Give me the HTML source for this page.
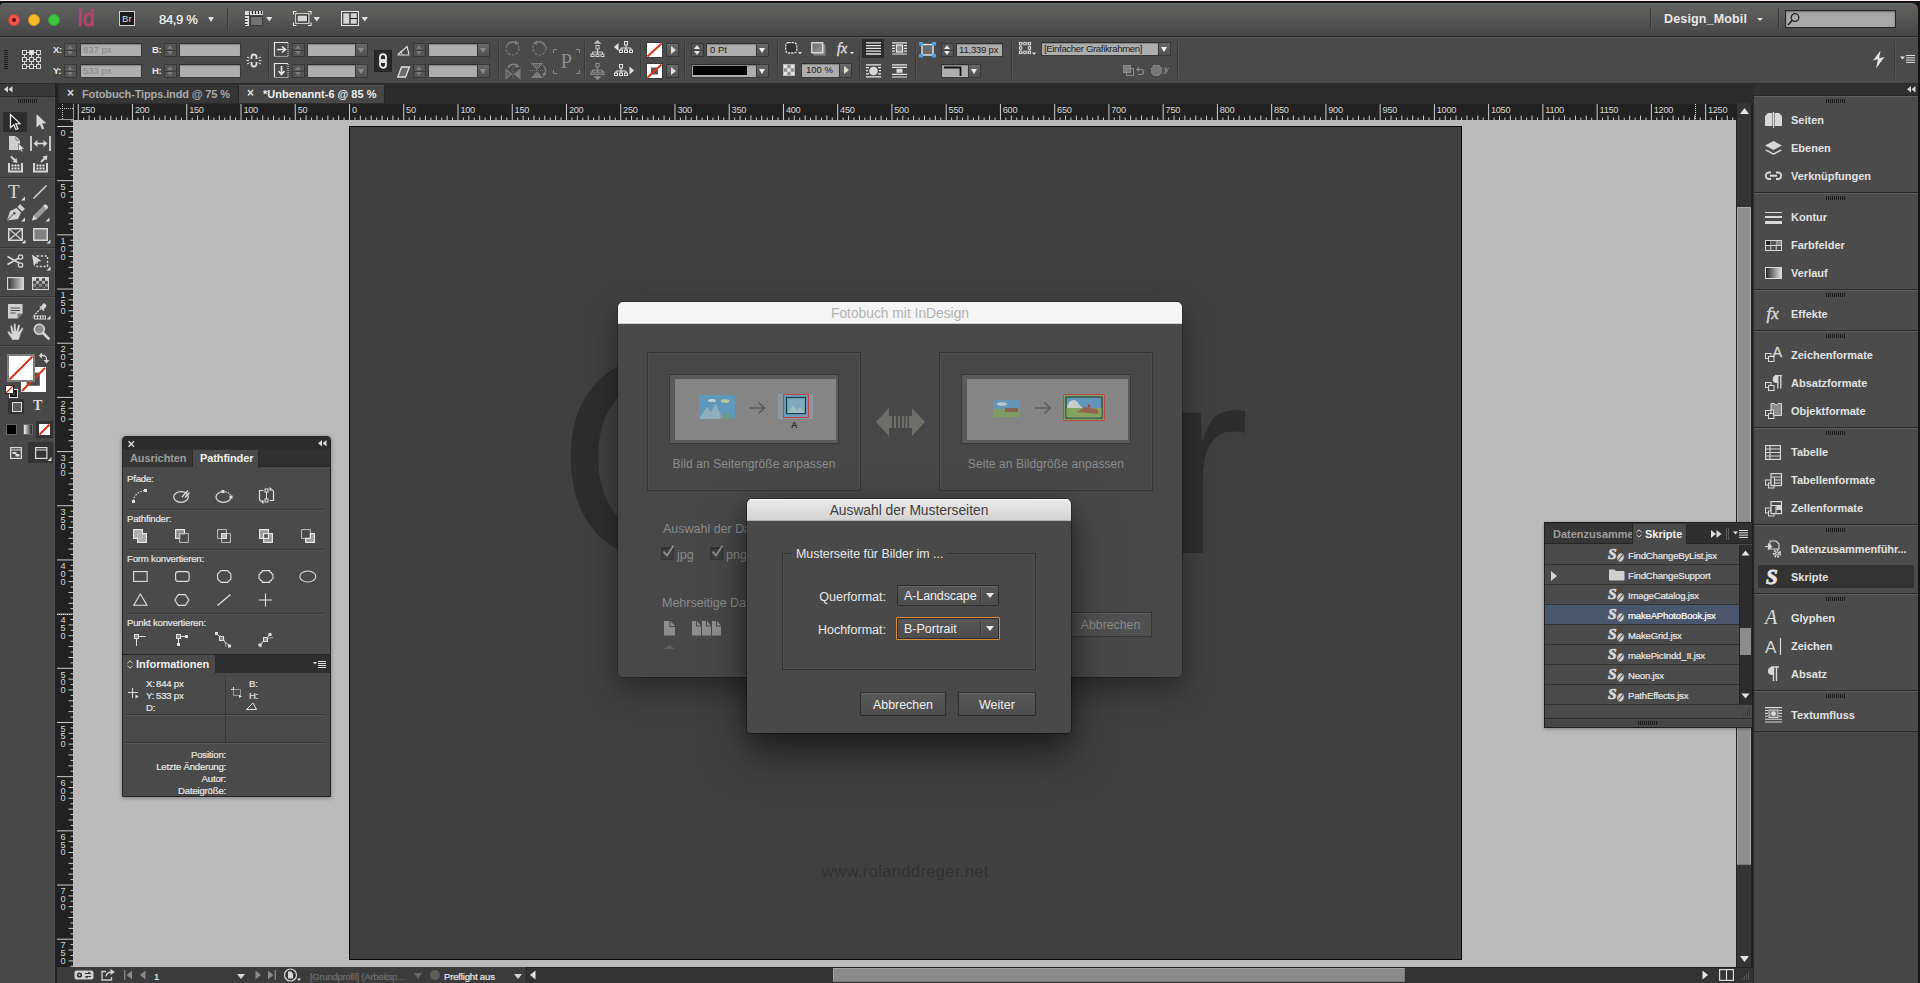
<!DOCTYPE html>
<html lang="de"><head><meta charset="utf-8"><title>InDesign</title>
<style>
*{box-sizing:border-box;margin:0;padding:0}
html,body{width:1920px;height:983px;overflow:hidden;background:#3a3a3a}
body{font-family:"Liberation Sans",sans-serif;font-size:11px;color:#ddd;-webkit-font-smoothing:antialiased}
#app{position:relative;width:1920px;height:983px;overflow:hidden;background:#3c3c3c}
.abs{position:absolute}
svg{position:absolute;overflow:visible}
/* app bar */
#appbar{position:absolute;left:0;top:0;width:1918px;height:37px;background:linear-gradient(#fbeef3 0,#fbeef3 1px,#1a1214 1px,#1a1214 2.800px,#707471 3px,#5e635f 4.500px,#5e5e5c 9px,#555 20px,#464646 35px);border-bottom:1px solid #232323}
#ctrl{position:absolute;left:0;top:37px;width:1918px;height:47px;background:#4a4a4a;border-top:1px solid #5c5c5c;border-bottom:1px solid #2a2a2a}
.vsep{position:absolute;width:2px;top:5px;height:36px;border-left:1px solid #3a3a3a;border-right:1px solid #565656}
.fld{position:absolute;height:14px;background:#aeaeae;border:1px solid #3a3a3a;border-top-color:#2e2e2e;color:#222;font-size:10px;line-height:12px;padding-left:3px;white-space:nowrap;overflow:hidden;box-shadow:inset 0 1px 1px rgba(0,0,0,.25)}
.fld.dis{color:#858585}
.stp{position:absolute;width:13px;height:14px;background:#555;border:1px solid #383838}
.stp:before{content:"";position:absolute;left:2px;top:1px;border:3.5px solid transparent;border-top:0;border-bottom:4px solid #7a7a7a}
.stp:after{content:"";position:absolute;left:2px;top:7px;border:3.5px solid transparent;border-bottom:0;border-top:4px solid #7a7a7a}
.stp.on:before{border-bottom-color:#e8e8e8}.stp.on:after{border-top-color:#e8e8e8}
.stp i{position:absolute;left:0;right:0;top:5.5px;height:1px;background:#3c3c3c}
.ddb{position:absolute;width:13px;height:14px;background:linear-gradient(#686868,#505050);border:1px solid #383838}
.ddb:after{content:"";position:absolute;left:2px;top:4px;border:3.5px solid transparent;border-bottom:0;border-top:5px solid #8a8a8a}
.ddb.on:after{border-top-color:#f0f0f0}
.arb{position:absolute;width:13px;height:14px;background:linear-gradient(#6a6a6a,#545454);border:1px solid #383838}
.arb:after{content:"";position:absolute;left:4px;top:2px;border:4px solid transparent;border-right:0;border-left:5px solid #ddd}
.lbl{position:absolute;color:#e6e6e6;font-size:9.500px;font-weight:bold;line-height:12px;letter-spacing:-.3px}
.sm{position:absolute;font-size:9.600px;line-height:12px;color:#e6e6e6;letter-spacing:-.2px;white-space:nowrap;-webkit-text-stroke:.2px}
.hsep{position:absolute;height:2px;border-top:1px solid #3a3a3a;border-bottom:1px solid #565656}
.pi{position:absolute}
</style></head>
<body><div id="app">
<div id="appbar"></div>
<div id="ctrl"></div>
<!-- traffic lights -->
<div class="abs" style="left:8px;top:14px;width:12px;height:12px;border-radius:50%;background:#f1574f;border:1px solid #c9423b"></div>
<div class="abs" style="left:12px;top:18px;width:4px;height:4px;border-radius:50%;background:#5a0f0c"></div>
<div class="abs" style="left:28px;top:14px;width:12px;height:12px;border-radius:50%;background:#f7bb2b;border:1px solid #d39c20"></div>
<div class="abs" style="left:48px;top:14px;width:12px;height:12px;border-radius:50%;background:#3ec63f;border:1px solid #2ea52f"></div>
<div class="abs" style="left:77px;top:4px;font-size:24.500px;line-height:28px;color:#b5446b;transform:scaleX(.84);transform-origin:0 0;-webkit-text-stroke:.9px #b5446b">Id</div>
<div class="abs" style="left:119px;top:11px;width:16px;height:15px;background:#1c1c1c;border:1px solid #d0d0d0;color:#dedede;font-size:9.500px;line-height:13px;text-align:center;letter-spacing:.2px">Br</div>
<div class="abs" style="left:159px;top:12px;font-size:13px;line-height:16px;color:#ececec;letter-spacing:-.35px;text-shadow:0 0 .6px #ececec">84,9 %</div>
<div class="abs" style="left:208px;top:17px;border:3.5px solid transparent;border-bottom:0;border-top:5px solid #e0e0e0"></div>
<div class="abs" style="left:227px;top:8px;width:2px;height:21px;border-left:1px solid #3a3a3a;border-right:1px solid #5c5c5c"></div>
<!-- view options icon -->
<svg class="abs" style="left:245px;top:11px" width="28" height="16" viewBox="0 0 28 16"><rect x="0" y="0" width="18" height="15" fill="#dedede"/><rect x="5.500" y="5.500" width="12" height="9" fill="#727272" stroke="#3a3a3a"/><path d="M0 4.500h18M4.500 0v15" stroke="#444" fill="none"/><path d="M7.500 0v3M10.500 0v3M13.500 0v3M16.500 0v3M0 7.500h2.500M0 10.500h2.500M0 13.500h2.500" stroke="#222" stroke-width="1.200"/><path d="M21 6h6.500l-3.250 4.500z" fill="#e0e0e0"/></svg>
<!-- screen mode icon -->
<svg class="abs" style="left:293px;top:11px" width="28" height="16" viewBox="0 0 28 16"><path d="M.5 3.500V.5H3.500M15 .5h3V3.500M18 11.500v3h-3M3.500 14.500H.5v-3" fill="none" stroke="#e4e4e4" stroke-width="1.200"/><rect x="2.800" y="2.800" width="13" height="9.400" fill="none" stroke="#e6e6e6" stroke-width="1.200"/><rect x="4" y="4" width="10.600" height="7" fill="#d2d2d2" stroke="#1e1e1e" stroke-width="1.100"/><path d="M20.500 6h6.500l-3.250 4.500z" fill="#e0e0e0"/></svg>
<!-- arrange icon -->
<svg class="abs" style="left:341px;top:11px" width="28" height="15" viewBox="0 0 28 15"><rect x=".6" y=".6" width="16.800" height="13.800" fill="#d2d2d2" stroke="#e8e8e8" stroke-width="1.200"/><rect x="1.700" y="1.700" width="14.600" height="11.600" fill="none" stroke="#1e1e1e" stroke-width="1"/><path d="M9 1.700v11.600M9 7.500h7.500" stroke="#1e1e1e" stroke-width="1.200" fill="none"/><path d="M20.500 6h6.500l-3.250 4.500z" fill="#e0e0e0"/></svg>
<!-- right of appbar -->
<div class="abs" style="left:1650px;top:8px;width:2px;height:21px;border-left:1px solid #3a3a3a;border-right:1px solid #5c5c5c"></div>
<div class="abs" style="left:1664px;top:12px;font-size:12.500px;font-weight:bold;line-height:15px;color:#e8e8e8;letter-spacing:.150px">Design_Mobil</div>
<div class="abs" style="left:1757px;top:18px;border:3px solid transparent;border-bottom:0;border-top:3.500px solid #e0e0e0"></div>
<div class="abs" style="left:1778px;top:8px;width:2px;height:21px;border-left:1px solid #3a3a3a;border-right:1px solid #5c5c5c"></div>
<div class="abs" style="left:1785px;top:10px;width:111px;height:18px;background:#a8a8a8;border:1px solid #252525;box-shadow:inset 0 1px 2px rgba(0,0,0,.35)"></div>
<svg class="abs" style="left:1787px;top:12px" width="14" height="14" viewBox="0 0 14 14"><circle cx="8" cy="5.500" r="3.800" fill="none" stroke="#222" stroke-width="1.300"/><path d="M5.300 8.300L1 13" stroke="#222" stroke-width="1.600"/></svg>

<svg class="abs" style="left:1912px;top:3px" width="6" height="6" viewBox="0 0 6 6"><path d="M0 0h6v6A6 6 0 0 0 0 0z" fill="#141414"/></svg>
<svg class="abs" style="left:0;top:3px" width="4" height="4" viewBox="0 0 4 4"><path d="M0 0h4A4 4 0 0 0 0 4z" fill="#141414"/></svg>

<!-- control bar widgets -->
<div class="abs" style="left:4px;top:50px;width:4px;height:20px;background:repeating-linear-gradient(#1c1c1c 0,#1c1c1c 1px,transparent 1px,transparent 2px)"></div>
<svg class="abs" style="left:22px;top:50px" width="20" height="20" viewBox="0 0 20 20" fill="none" stroke="#d4d4d4"><path d="M4 2.500h12M4 9.500h12M4 16.500h12M2.500 4v12M9.500 4v12M16.500 4v12" stroke-width="1"/><g fill="#494949"><rect x=".5" y=".5" width="4" height="4"/><rect x="14.500" y=".5" width="4" height="4"/><rect x=".5" y="7.500" width="4" height="4"/><rect x="7.500" y="7.500" width="4" height="4"/><rect x="14.500" y="7.500" width="4" height="4"/><rect x=".5" y="14.500" width="4" height="4"/><rect x="7.500" y="14.500" width="4" height="4"/><rect x="14.500" y="14.500" width="4" height="4"/></g><rect x="7.500" y=".5" width="4" height="4" fill="#e8e8e8"/></svg>
<div class="lbl" style="left:53px;top:44px">X:</div><div class="lbl" style="left:53px;top:65px">Y:</div>
<div class="stp" style="left:64px;top:43px"><i></i></div><div class="stp" style="left:64px;top:64px"><i></i></div>
<div class="fld dis" style="left:80px;top:43px;width:62px;font-size:9.500px;padding-left:2px;line-height:11px">837 px</div><div class="fld dis" style="left:80px;top:64px;width:62px;font-size:9.500px;padding-left:2px;line-height:11px">533 px</div>
<div class="lbl" style="left:152px;top:44px">B:</div><div class="lbl" style="left:152px;top:65px">H:</div>
<div class="stp" style="left:164px;top:43px"><i></i></div><div class="stp" style="left:164px;top:64px"><i></i></div>
<div class="fld" style="left:179px;top:43px;width:62px"></div><div class="fld" style="left:179px;top:64px;width:62px"></div>
<!-- broken chain -->
<svg class="abs" style="left:246px;top:52px" width="16" height="17" viewBox="0 0 16 17" fill="none" stroke="#e0e0e0"><path d="M5.500 7V5a2.500 2.500 0 0 1 5 0v2M5.500 10v2a2.500 2.500 0 0 0 5 0v-2" stroke-width="1.800"/><path d="M1 5l2.500 1.200M0.500 8.500h2.500M1 12l2.500-1.200M15 5l-2.500 1.200M15.500 8.500h-2.500M15 12l-2.500-1.200" stroke-width="1"/></svg>
<div class="vsep" style="left:268px;top:42px"></div>
<!-- scale x / y icons -->
<svg class="abs" style="left:274px;top:42px" width="15" height="15" viewBox="0 0 15 15" fill="none" stroke="#e6e6e6"><path d="M.5 14V.5h13.500" stroke-width="1.200"/><path d="M14 1v13.500H.5" stroke-dasharray="1 1"/><path d="M3 7.500h8M8 4.500l3.500 3-3.500 3" stroke-width="1.600"/></svg>
<svg class="abs" style="left:274px;top:63px" width="15" height="15" viewBox="0 0 15 15" fill="none" stroke="#e6e6e6"><path d="M.5 14V.5h13.500" stroke-width="1.200"/><path d="M14 1v13.500H.5" stroke-dasharray="1 1"/><path d="M7.500 3v8M4.500 8l3 3.500 3-3.500" stroke-width="1.600"/></svg>
<div class="stp" style="left:292px;top:43px"><i></i></div><div class="stp" style="left:292px;top:64px"><i></i></div>
<div class="fld" style="left:307px;top:43px;width:49px"></div><div class="fld" style="left:307px;top:64px;width:49px"></div>
<div class="ddb" style="left:355px;top:43px"></div><div class="ddb" style="left:355px;top:64px"></div>
<!-- link button -->
<div class="abs" style="left:374px;top:50px;width:18px;height:22px;background:#2a2a2a;border:1px solid #242424"></div>
<svg class="abs" style="left:378px;top:53px" width="10" height="16" viewBox="0 0 10 16" fill="none" stroke="#f0f0f0" stroke-width="1.800"><rect x="2" y="1.200" width="6" height="8" rx="3"/><rect x="2" y="6.800" width="6" height="8" rx="3"/></svg>
<!-- rotate / shear icons -->
<svg class="abs" style="left:397px;top:45px" width="13" height="11" viewBox="0 0 13 11" fill="none" stroke="#e0e0e0" stroke-width="1.200"><path d="M.5 10h12M1 9.500L10 1.500l2 7.500"/><path d="M5 9.500a5 5 0 0 0-1.300-3.300" stroke-width="1"/></svg>
<svg class="abs" style="left:397px;top:66px" width="13" height="12" viewBox="0 0 13 12" fill="#6a6a6a" stroke="#e0e0e0" stroke-width="1.300"><path d="M4.500 1h8l-4 10H.8z"/></svg>
<div class="stp" style="left:413px;top:43px"><i></i></div><div class="stp" style="left:413px;top:64px"><i></i></div>
<div class="fld" style="left:428px;top:43px;width:50px"></div><div class="fld" style="left:428px;top:64px;width:50px"></div>
<div class="ddb" style="left:477px;top:43px"></div><div class="ddb" style="left:477px;top:64px"></div>
<div class="vsep" style="left:498px;top:42px"></div>
<!-- rotate 90 cw / ccw, flips -->
<svg class="abs" style="left:505px;top:40px" width="16" height="16" viewBox="0 0 16 16" fill="none" stroke="#7d7d7d"><circle cx="7.500" cy="8.500" r="6.500" stroke-dasharray="2.500 1.600" stroke-width="1.200"/><path d="M2 5.500A6.500 6.500 0 0 1 11 2.800" stroke-width="1.600"/><path d="M10 .5l4.500 2.800-4.500 2z" fill="#7d7d7d" stroke="none"/></svg>
<svg class="abs" style="left:531px;top:40px" width="16" height="16" viewBox="0 0 16 16" fill="none" stroke="#7d7d7d"><circle cx="8.500" cy="8.500" r="6.500" stroke-dasharray="2.500 1.600" stroke-width="1.200"/><path d="M14 5.500A6.500 6.500 0 0 0 5 2.800" stroke-width="1.600"/><path d="M6 .5L1.500 3.300l4.500 2z" fill="#7d7d7d" stroke="none"/></svg>
<svg class="abs" style="left:505px;top:62px" width="16" height="17" viewBox="0 0 16 17" fill="none" stroke="#7d7d7d"><path d="M1 7.500l5.500 4.500-5.500 4.500z" fill="#606060" stroke-width="1.100"/><path d="M15 7.500l-5.500 4.500 5.500 4.500z" fill="#7d7d7d" stroke-width="1.100"/><path d="M8 5v12" stroke-dasharray="1 1"/><path d="M3 6A5.500 5.500 0 0 1 12.500 4.500" stroke-width="1.500"/><path d="M11.500 1l3 4-4.500.8z" fill="#7d7d7d" stroke="none"/></svg>
<svg class="abs" style="left:530px;top:62px" width="18" height="17" viewBox="0 0 18 17" fill="none" stroke="#7d7d7d"><path d="M2 1.500l5 5.500 5-5.500z" fill="#606060" stroke-width="1.100"/><path d="M2 15.500l5-5.500 5 5.500z" fill="#7d7d7d" stroke-width="1.100"/><path d="M0 8.500h14" stroke-dasharray="1 1"/><path d="M13 3.500A6 6 0 0 1 14.500 12" stroke-width="1.500"/><path d="M16.500 11l-3 4.500-1.200-4.500z" fill="#7d7d7d" stroke="none"/></svg>
<!-- P -->
<svg class="abs" style="left:553px;top:49px" width="27" height="26" viewBox="0 0 27 26" fill="none" stroke="#8a8a8a"><path d="M.5 4V.5H4M23 .5h3.500V4M26.500 21v3.500H23M4 24.500H.5V21" stroke-width="1"/><text x="7.500" y="18.500" font-family="Liberation Serif, serif" font-size="21" fill="#8c8c8c" stroke="none">P</text></svg>
<div class="vsep" style="left:584px;top:42px"></div>
<!-- select container/content -->
<svg class="abs" style="left:590px;top:40px" width="15" height="17" viewBox="0 0 15 17" fill="none" stroke="#cfcfcf"><path d="M3.500 3.800h8L7.500 0z" fill="#bdbdbd" stroke="none"/><rect x="6" y="5.500" width="3" height="3.500"/><path d="M7.500 9v3M2.500 14.500V12h10v2.500M7.500 12v2.500"/><rect x="1" y="14" width="3" height="2.500"/><rect x="6" y="14" width="3" height="2.500"/><rect x="11" y="14" width="3" height="2.500"/></svg>
<svg class="abs" style="left:590px;top:63px" width="15" height="17" viewBox="0 0 15 17" fill="none" stroke="#8f8f8f"><path d="M3.500 13.200h8L7.500 17z" fill="#8f8f8f" stroke="none"/><rect x="6" y=".5" width="3" height="3.500"/><path d="M7.500 4v3M2.500 9.500V7h10v2.500M7.500 7v2.500"/><rect x="1" y="9" width="3" height="2.500"/><rect x="6" y="9" width="3" height="2.500"/><rect x="11" y="9" width="3" height="2.500"/></svg>
<svg class="abs" style="left:614px;top:41px" width="20" height="13" viewBox="0 0 20 13" fill="none" stroke="#e4e4e4"><path d="M0 6l4.500-4v8z" fill="#e4e4e4" stroke="none"/><rect x="10.500" y=".5" width="3" height="3.500"/><path d="M12 4v3M7 9.500V7h10v2.500M12 7v2.500"/><rect x="5.500" y="9" width="3" height="2.500"/><rect x="10.500" y="9" width="3" height="2.500"/><rect x="15.500" y="9" width="3" height="2.500"/></svg>
<svg class="abs" style="left:614px;top:64px" width="20" height="13" viewBox="0 0 20 13" fill="none" stroke="#e4e4e4"><path d="M20 6.500l-4.500-4v8z" fill="#e4e4e4" stroke="none"/><rect x="5.500" y=".5" width="3" height="3.500"/><path d="M7 4v3M2 9.500V7h10v2.500M7 7v2.500"/><rect x=".5" y="9" width="3" height="2.500"/><rect x="5.500" y="9" width="3" height="2.500"/><rect x="10.500" y="9" width="3" height="2.500"/></svg>
<div class="vsep" style="left:640px;top:42px"></div>
<!-- fill / stroke -->
<svg class="abs" style="left:646px;top:42px" width="17" height="16" viewBox="0 0 17 16"><rect x=".5" y=".5" width="16" height="15" fill="#fff" stroke="#3a3a3a"/><path d="M1.500 14.500L15.500 1.500" stroke="#d5361b" stroke-width="2"/></svg>
<svg class="abs" style="left:646px;top:63px" width="17" height="16" viewBox="0 0 17 16"><rect x=".5" y=".5" width="16" height="15" fill="#fff" stroke="#3a3a3a"/><rect x="5" y="4.500" width="7" height="7" fill="#5a5a5a"/><path d="M1.500 14.500L15.500 1.500" stroke="#d5361b" stroke-width="2"/></svg>
<div class="arb" style="left:666px;top:43px"></div><div class="arb" style="left:666px;top:64px"></div>
<div class="vsep" style="left:684px;top:42px"></div>
<div class="stp on" style="left:691px;top:43px"><i></i></div>
<div class="fld" style="left:706px;top:43px;width:51px;font-size:9.500px;padding-left:3px">0 Pt</div><div class="ddb on" style="left:756px;top:43px"></div>
<div class="fld" style="left:691px;top:64px;width:66px"></div><div class="abs" style="left:693px;top:66px;width:54px;height:9px;background:#000"></div><div class="ddb on" style="left:756px;top:64px"></div>
<div class="vsep" style="left:777px;top:42px"></div>

<!-- corner / shadow / fx -->
<svg class="abs" style="left:785px;top:42px" width="17" height="13" viewBox="0 0 17 13" fill="none"><rect x=".7" y=".7" width="11" height="10.300" rx="2.800" fill="#333" stroke="#e2e2e2" stroke-width="1.300" stroke-dasharray="2.200 1"/><path d="M13 10h4l-2 2.500z" fill="#e0e0e0"/></svg>
<svg class="abs" style="left:811px;top:42px" width="16" height="15" viewBox="0 0 16 15"><defs><linearGradient id="gsh" x1="0" y1="0" x2="1" y2="1"><stop offset="0" stop-color="#6a6a6a"/><stop offset="1" stop-color="#9a9a9a"/></linearGradient></defs><rect x="3" y="3" width="12" height="11" fill="#777" opacity=".7"/><rect x="2" y="2" width="12" height="11" fill="#999" opacity=".6"/><rect x=".75" y=".75" width="11" height="10" fill="url(#gsh)" stroke="#e0e0e0" stroke-width="1.300"/></svg>
<svg class="abs" style="left:836px;top:40px" width="20" height="18" viewBox="0 0 20 18"><text x="1" y="12.500" font-family="Liberation Serif, serif" font-style="italic" font-size="14" fill="#e0e0e0" stroke="#e0e0e0" stroke-width=".35">fx</text><path d="M14 12h4l-2 2.500z" fill="#e0e0e0"/></svg>
<svg class="abs" style="left:783px;top:64px" width="12" height="12" viewBox="0 0 12 12"><rect x=".5" y=".5" width="11" height="11" fill="#8e8e8e" stroke="#bbb"/><path d="M1 1h3.300v3.300H1zM7.700 1H11v3.300H7.700zM4.300 4.300h3.400v3.400H4.300zM1 7.700h3.300V11H1zM7.700 7.700H11V11H7.700z" fill="#e6e6e6"/></svg>
<div class="fld" style="left:801px;top:63px;width:39px;height:15px;font-size:9.500px;line-height:12px;padding-left:4px">100 %</div><div class="arb" style="left:839px;top:63px;height:15px"></div>
<div class="vsep" style="left:859px;top:42px"></div>
<!-- text wrap -->
<div class="abs" style="left:862px;top:39px;width:22px;height:19px;background:#2c2c2c"></div>
<svg class="abs" style="left:866px;top:42px" width="15" height="13" viewBox="0 0 15 13" stroke="#e6e6e6" stroke-width="1.300"><path d="M0 .8h15M0 3.600h15M0 6.400h15M0 9.200h15M0 12h15"/></svg>
<svg class="abs" style="left:892px;top:42px" width="15" height="13" viewBox="0 0 15 13" stroke="#e6e6e6" stroke-width="1.200"><path d="M0 .8h15M0 3.600h3M12 3.600h3M0 6.400h3M12 6.400h3M0 9.200h3M12 9.200h3M0 12h15"/><rect x="4.500" y="3" width="6" height="7" fill="#8a8a8a" stroke-width="1.300"/></svg>
<svg class="abs" style="left:866px;top:64px" width="15" height="14" viewBox="0 0 15 14" stroke="#e6e6e6" stroke-width="1.200"><path d="M0 .8h15M0 3.600h3M12 3.600h3M0 6.700h2M13 6.700h2M0 9.800h3M12 9.800h3M0 12.800h15"/><circle cx="7.500" cy="7" r="4.300" fill="#d8d8d8" stroke="none"/></svg>
<svg class="abs" style="left:892px;top:64px" width="15" height="14" viewBox="0 0 15 14" stroke="#e6e6e6" stroke-width="1.200"><path d="M0 .8h15M0 3.400h15M0 10.400h15M0 13h15"/><rect x="4.500" y="4.800" width="6" height="4" fill="#d8d8d8" stroke="none"/></svg>
<div class="vsep" style="left:915px;top:42px"></div>
<!-- corner options -->
<svg class="abs" style="left:919px;top:42px" width="17" height="16" viewBox="0 0 17 16"><rect x="3" y="2.500" width="11" height="10.500" fill="#6a6a6a" stroke="#e8e8e8" stroke-width="1.400"/><g fill="#4aa0ea"><rect x="0" y="0" width="4" height="3.500"/><rect x="13" y="0" width="4" height="3.500"/><rect x="0" y="12" width="4" height="3.500"/><rect x="13" y="12" width="4" height="3.500"/></g></svg>
<div class="stp on" style="left:941px;top:43px"><i></i></div>
<div class="fld" style="left:956px;top:43px;width:47px;font-size:9.500px;letter-spacing:-.2px;padding-left:2px">11,339 px</div>
<div class="fld" style="left:941px;top:64px;width:28px"></div><svg class="abs" style="left:944px;top:66px" width="20" height="10" viewBox="0 0 20 10"><path d="M0 1.500h16.500V10" fill="none" stroke="#111" stroke-width="1.800"/></svg><div class="ddb on" style="left:968px;top:64px"></div>
<div class="vsep" style="left:1011px;top:42px"></div>
<!-- object style -->
<svg class="abs" style="left:1019px;top:42px" width="17" height="13" viewBox="0 0 17 13" fill="none" stroke="#e6e6e6"><rect x="1.500" y="1.500" width="9" height="9" stroke-dasharray="1 1"/><g fill="#494949" stroke-width=".9"><rect x=".4" y=".4" width="2.400" height="2.400"/><rect x="4.800" y=".4" width="2.400" height="2.400"/><rect x="9.200" y=".4" width="2.400" height="2.400"/><rect x=".4" y="4.800" width="2.400" height="2.400"/><rect x="9.200" y="4.800" width="2.400" height="2.400"/><rect x=".4" y="9.200" width="2.400" height="2.400"/><rect x="4.800" y="9.200" width="2.400" height="2.400"/><rect x="9.200" y="9.200" width="2.400" height="2.400"/></g><path d="M13 10.500h4l-2 2.500z" fill="#e0e0e0" stroke="none"/></svg>
<div class="fld" style="left:1041px;top:42px;width:118px;height:14px;font-size:9.700px;letter-spacing:-.4px;padding-left:2px">[Einfacher Grafikrahmen]</div><div class="ddb on" style="left:1158px;top:42px"></div>
<svg class="abs" style="left:1123px;top:65px" width="22" height="12" viewBox="0 0 22 12" fill="none" stroke="#8c8c8c"><rect x=".5" y=".5" width="7" height="7" fill="#777"/><rect x="3.500" y="3.500" width="7" height="7"/><path d="M14 4.500h4a2.500 2.500 0 0 1 0 5h-3" stroke-width="1.200"/><path d="M16 2l-3 2.500 3 2.500z" fill="#8c8c8c" stroke="none"/></svg>
<svg class="abs" style="left:1151px;top:65px" width="20" height="12" viewBox="0 0 20 12" fill="none" stroke="#8c8c8c"><path d="M2.500 .5h6a2 2 0 0 0 2 2v6a2 2 0 0 0-2 2h-6a2 2 0 0 0-2-2v-6a2 2 0 0 0 2-2z" fill="#777" stroke-dasharray="2 1"/><path d="M12 9l6-6M13 3.500l4 3M15 2v7" stroke-width="1"/></svg>
<div class="vsep" style="left:1177px;top:42px"></div>
<!-- right end -->
<svg class="abs" style="left:1872px;top:50px" width="14" height="19" viewBox="0 0 14 19"><path d="M8.500 .5L1 10.500l5 -1.200L4 18.500 12.500 7 7.200 8.300z" fill="#e2e2e2"/></svg>
<div class="vsep" style="left:1894px;top:42px"></div>
<svg class="abs" style="left:1900px;top:55px" width="15" height="8" viewBox="0 0 15 8"><path d="M0 1.500h5L2.500 4.500z" fill="#e0e0e0"/><path d="M6 .5h9M6 2.800h9M6 5.100h9M6 7.400h9" stroke="#e0e0e0" stroke-width="1"/></svg>

<!-- tab bar -->
<div class="abs" style="left:0;top:84px;width:1918px;height:20px;background:#2d2d2d"></div>
<!-- left toolbar -->
<div id="tools" class="abs" style="left:0;top:84px;width:57px;height:899px;background:#484848;border-right:2px solid #222;box-shadow:inset -1px 0 0 #525252">
<div class="abs" style="left:0;top:0;width:55px;height:13px;background:#383838;border-bottom:1px solid #2b2b2b"></div>
</div>
<!-- doc tabs -->
<div id="tabs" class="abs" style="left:57px;top:84px;width:1696px;height:20px;background:#2d2d2d;border-left:1px solid #242424">
<div class="abs tab" style="left:1px;top:1px;width:180px;height:18px;background:#353535;border-right:1px solid #262626"></div>
<div class="abs tab" style="left:181px;top:1px;width:146px;height:18px;background:#474747;border-right:1px solid #262626;box-shadow:inset 0 1px 0 #545454"></div>
</div>
<!-- ruler corner -->
<div class="abs" style="left:57px;top:103px;width:16px;height:17px;background:#212121"></div>
<!-- pasteboard -->
<div id="pb" class="abs" style="left:73px;top:120px;width:1663px;height:847px;background:#bababa;overflow:hidden">
<div id="page" class="abs" style="left:276px;top:6px;width:1113px;height:834px;background:#404040;border:1px solid #050505"></div>
</div>
<!-- v scrollbar -->
<div class="abs" style="left:1736px;top:103px;width:17px;height:864px;background:#353535;border-left:1px solid #222;border-right:2px solid #202020"></div>
<div class="abs" style="left:1737px;top:207px;width:14px;height:658px;background:#909090;border:1px solid #a6a6a6;border-bottom-color:#7a7a7a"></div>
<!-- status bar -->
<div id="status" class="abs" style="left:57px;top:967px;width:1696px;height:16px;background:#333;border-top:1px solid #222"></div><div class="abs" style="left:57px;top:967px;width:469px;height:16px;background:#3b3b3b"></div>
<!-- right dock -->
<div id="dock" class="abs" style="left:1753px;top:84px;width:165px;height:899px;background:#464646;border-left:1px solid #2a2a2a"></div>
<div class="abs" style="left:1918px;top:1px;width:2px;height:982px;background:#141414"></div><div class="abs" style="left:1918px;top:0;width:2px;height:1px;background:#fbeef3"></div>

<svg class="abs" style="left:73px;top:104px" width="1663" height="16" viewBox="0 0 1663 16" font-family="Liberation Sans, sans-serif" font-size="9.2" letter-spacing="-0.3" fill="#d8d8d8"><rect x="0" y="0" width="1663" height="16" fill="#212121"/><path d="M5.28 0V16 M10.70 13.5V16 M16.12 11.5V16 M21.55 13.5V16 M26.97 11.5V16 M32.40 13.5V16 M37.82 11.5V16 M43.25 13.5V16 M48.67 11.5V16 M54.10 13.5V16 M59.52 0V16 M64.94 13.5V16 M70.37 11.5V16 M75.79 13.5V16 M81.22 11.5V16 M86.64 13.5V16 M92.07 11.5V16 M97.49 13.5V16 M102.92 11.5V16 M108.34 13.5V16 M113.77 0V16 M119.19 13.5V16 M124.61 11.5V16 M130.04 13.5V16 M135.46 11.5V16 M140.89 13.5V16 M146.31 11.5V16 M151.74 13.5V16 M157.16 11.5V16 M162.59 13.5V16 M168.01 0V16 M173.43 13.5V16 M178.86 11.5V16 M184.28 13.5V16 M189.71 11.5V16 M195.13 13.5V16 M200.56 11.5V16 M205.98 13.5V16 M211.41 11.5V16 M216.83 13.5V16 M222.25 0V16 M227.68 13.5V16 M233.10 11.5V16 M238.53 13.5V16 M243.95 11.5V16 M249.38 13.5V16 M254.80 11.5V16 M260.23 13.5V16 M265.65 11.5V16 M271.08 13.5V16 M276.50 0V16 M281.92 13.5V16 M287.35 11.5V16 M292.77 13.5V16 M298.20 11.5V16 M303.62 13.5V16 M309.05 11.5V16 M314.47 13.5V16 M319.90 11.5V16 M325.32 13.5V16 M330.75 0V16 M336.17 13.5V16 M341.59 11.5V16 M347.02 13.5V16 M352.44 11.5V16 M357.87 13.5V16 M363.29 11.5V16 M368.72 13.5V16 M374.14 11.5V16 M379.57 13.5V16 M384.99 0V16 M390.41 13.5V16 M395.84 11.5V16 M401.26 13.5V16 M406.69 11.5V16 M412.11 13.5V16 M417.54 11.5V16 M422.96 13.5V16 M428.39 11.5V16 M433.81 13.5V16 M439.24 0V16 M444.66 13.5V16 M450.08 11.5V16 M455.51 13.5V16 M460.93 11.5V16 M466.36 13.5V16 M471.78 11.5V16 M477.21 13.5V16 M482.63 11.5V16 M488.06 13.5V16 M493.48 0V16 M498.90 13.5V16 M504.33 11.5V16 M509.75 13.5V16 M515.18 11.5V16 M520.60 13.5V16 M526.03 11.5V16 M531.45 13.5V16 M536.88 11.5V16 M542.30 13.5V16 M547.72 0V16 M553.15 13.5V16 M558.57 11.5V16 M564.00 13.5V16 M569.42 11.5V16 M574.85 13.5V16 M580.27 11.5V16 M585.70 13.5V16 M591.12 11.5V16 M596.55 13.5V16 M601.97 0V16 M607.39 13.5V16 M612.82 11.5V16 M618.24 13.5V16 M623.67 11.5V16 M629.09 13.5V16 M634.52 11.5V16 M639.94 13.5V16 M645.37 11.5V16 M650.79 13.5V16 M656.21 0V16 M661.64 13.5V16 M667.06 11.5V16 M672.49 13.5V16 M677.91 11.5V16 M683.34 13.5V16 M688.76 11.5V16 M694.19 13.5V16 M699.61 11.5V16 M705.04 13.5V16 M710.46 0V16 M715.88 13.5V16 M721.31 11.5V16 M726.73 13.5V16 M732.16 11.5V16 M737.58 13.5V16 M743.01 11.5V16 M748.43 13.5V16 M753.86 11.5V16 M759.28 13.5V16 M764.70 0V16 M770.13 13.5V16 M775.55 11.5V16 M780.98 13.5V16 M786.40 11.5V16 M791.83 13.5V16 M797.25 11.5V16 M802.68 13.5V16 M808.10 11.5V16 M813.53 13.5V16 M818.95 0V16 M824.37 13.5V16 M829.80 11.5V16 M835.22 13.5V16 M840.65 11.5V16 M846.07 13.5V16 M851.50 11.5V16 M856.92 13.5V16 M862.35 11.5V16 M867.77 13.5V16 M873.19 0V16 M878.62 13.5V16 M884.04 11.5V16 M889.47 13.5V16 M894.89 11.5V16 M900.32 13.5V16 M905.74 11.5V16 M911.17 13.5V16 M916.59 11.5V16 M922.02 13.5V16 M927.44 0V16 M932.86 13.5V16 M938.29 11.5V16 M943.71 13.5V16 M949.14 11.5V16 M954.56 13.5V16 M959.99 11.5V16 M965.41 13.5V16 M970.84 11.5V16 M976.26 13.5V16 M981.68 0V16 M987.11 13.5V16 M992.53 11.5V16 M997.96 13.5V16 M1003.38 11.5V16 M1008.81 13.5V16 M1014.23 11.5V16 M1019.66 13.5V16 M1025.08 11.5V16 M1030.51 13.5V16 M1035.93 0V16 M1041.35 13.5V16 M1046.78 11.5V16 M1052.20 13.5V16 M1057.63 11.5V16 M1063.05 13.5V16 M1068.48 11.5V16 M1073.90 13.5V16 M1079.33 11.5V16 M1084.75 13.5V16 M1090.17 0V16 M1095.60 13.5V16 M1101.02 11.5V16 M1106.45 13.5V16 M1111.87 11.5V16 M1117.30 13.5V16 M1122.72 11.5V16 M1128.15 13.5V16 M1133.57 11.5V16 M1139.00 13.5V16 M1144.42 0V16 M1149.84 13.5V16 M1155.27 11.5V16 M1160.69 13.5V16 M1166.12 11.5V16 M1171.54 13.5V16 M1176.97 11.5V16 M1182.39 13.5V16 M1187.82 11.5V16 M1193.24 13.5V16 M1198.66 0V16 M1204.09 13.5V16 M1209.51 11.5V16 M1214.94 13.5V16 M1220.36 11.5V16 M1225.79 13.5V16 M1231.21 11.5V16 M1236.64 13.5V16 M1242.06 11.5V16 M1247.49 13.5V16 M1252.91 0V16 M1258.33 13.5V16 M1263.76 11.5V16 M1269.18 13.5V16 M1274.61 11.5V16 M1280.03 13.5V16 M1285.46 11.5V16 M1290.88 13.5V16 M1296.31 11.5V16 M1301.73 13.5V16 M1307.15 0V16 M1312.58 13.5V16 M1318.00 11.5V16 M1323.43 13.5V16 M1328.85 11.5V16 M1334.28 13.5V16 M1339.70 11.5V16 M1345.13 13.5V16 M1350.55 11.5V16 M1355.98 13.5V16 M1361.40 0V16 M1366.82 13.5V16 M1372.25 11.5V16 M1377.67 13.5V16 M1383.10 11.5V16 M1388.52 13.5V16 M1393.95 11.5V16 M1399.37 13.5V16 M1404.80 11.5V16 M1410.22 13.5V16 M1415.64 0V16 M1421.07 13.5V16 M1426.49 11.5V16 M1431.92 13.5V16 M1437.34 11.5V16 M1442.77 13.5V16 M1448.19 11.5V16 M1453.62 13.5V16 M1459.04 11.5V16 M1464.47 13.5V16 M1469.89 0V16 M1475.31 13.5V16 M1480.74 11.5V16 M1486.16 13.5V16 M1491.59 11.5V16 M1497.01 13.5V16 M1502.44 11.5V16 M1507.86 13.5V16 M1513.29 11.5V16 M1518.71 13.5V16 M1524.13 0V16 M1529.56 13.5V16 M1534.98 11.5V16 M1540.41 13.5V16 M1545.83 11.5V16 M1551.26 13.5V16 M1556.68 11.5V16 M1562.11 13.5V16 M1567.53 11.5V16 M1572.96 13.5V16 M1578.38 0V16 M1583.80 13.5V16 M1589.23 11.5V16 M1594.65 13.5V16 M1600.08 11.5V16 M1605.50 13.5V16 M1610.93 11.5V16 M1616.35 13.5V16 M1621.78 11.5V16 M1627.20 13.5V16 M1632.62 0V16 M1638.05 13.5V16 M1643.47 11.5V16 M1648.90 13.5V16 M1654.32 11.5V16 M1659.75 13.5V16" stroke="#cfcfcf" stroke-width="1" fill="none"/><text x="7.7" y="8.8">250</text><text x="61.9" y="8.8">200</text><text x="116.2" y="8.8">150</text><text x="170.4" y="8.8">100</text><text x="224.7" y="8.8">50</text><text x="278.9" y="8.8">0</text><text x="333.1" y="8.8">50</text><text x="387.4" y="8.8">100</text><text x="441.6" y="8.8">150</text><text x="495.9" y="8.8">200</text><text x="550.1" y="8.8">250</text><text x="604.4" y="8.8">300</text><text x="658.6" y="8.8">350</text><text x="712.9" y="8.8">400</text><text x="767.1" y="8.8">450</text><text x="821.3" y="8.8">500</text><text x="875.6" y="8.8">550</text><text x="929.8" y="8.8">600</text><text x="984.1" y="8.8">650</text><text x="1038.3" y="8.8">700</text><text x="1092.6" y="8.8">750</text><text x="1146.8" y="8.8">800</text><text x="1201.1" y="8.8">850</text><text x="1255.3" y="8.8">900</text><text x="1309.6" y="8.8">950</text><text x="1363.8" y="8.8">1000</text><text x="1418.0" y="8.8">1050</text><text x="1472.3" y="8.8">1100</text><text x="1526.5" y="8.8">1150</text><text x="1580.8" y="8.8">1200</text><text x="1635.0" y="8.8">1250</text><path d="M1622.5 0V16" stroke="#e0e0e0" stroke-dasharray="1 1"/></svg>
<svg class="abs" style="left:57px;top:120px" width="16" height="847" viewBox="0 0 16 847" font-family="Liberation Sans, sans-serif" font-size="9.2" letter-spacing="-0.3" fill="#d8d8d8"><rect x="0" y="0" width="16" height="847" fill="#212121"/><path d="M13.5 1.08H16 M0 6.50H16 M13.5 11.92H16 M11.5 17.34H16 M13.5 22.75H16 M11.5 28.17H16 M13.5 33.59H16 M11.5 39.01H16 M13.5 44.43H16 M11.5 49.84H16 M13.5 55.26H16 M0 60.68H16 M13.5 66.10H16 M11.5 71.52H16 M13.5 76.93H16 M11.5 82.35H16 M13.5 87.77H16 M11.5 93.19H16 M13.5 98.61H16 M11.5 104.02H16 M13.5 109.44H16 M0 114.86H16 M13.5 120.28H16 M11.5 125.70H16 M13.5 131.11H16 M11.5 136.53H16 M13.5 141.95H16 M11.5 147.37H16 M13.5 152.79H16 M11.5 158.20H16 M13.5 163.62H16 M0 169.04H16 M13.5 174.46H16 M11.5 179.88H16 M13.5 185.29H16 M11.5 190.71H16 M13.5 196.13H16 M11.5 201.55H16 M13.5 206.97H16 M11.5 212.38H16 M13.5 217.80H16 M0 223.22H16 M13.5 228.64H16 M11.5 234.06H16 M13.5 239.47H16 M11.5 244.89H16 M13.5 250.31H16 M11.5 255.73H16 M13.5 261.15H16 M11.5 266.56H16 M13.5 271.98H16 M0 277.40H16 M13.5 282.82H16 M11.5 288.24H16 M13.5 293.65H16 M11.5 299.07H16 M13.5 304.49H16 M11.5 309.91H16 M13.5 315.33H16 M11.5 320.74H16 M13.5 326.16H16 M0 331.58H16 M13.5 337.00H16 M11.5 342.42H16 M13.5 347.83H16 M11.5 353.25H16 M13.5 358.67H16 M11.5 364.09H16 M13.5 369.51H16 M11.5 374.92H16 M13.5 380.34H16 M0 385.76H16 M13.5 391.18H16 M11.5 396.60H16 M13.5 402.01H16 M11.5 407.43H16 M13.5 412.85H16 M11.5 418.27H16 M13.5 423.69H16 M11.5 429.10H16 M13.5 434.52H16 M0 439.94H16 M13.5 445.36H16 M11.5 450.78H16 M13.5 456.19H16 M11.5 461.61H16 M13.5 467.03H16 M11.5 472.45H16 M13.5 477.87H16 M11.5 483.28H16 M13.5 488.70H16 M0 494.12H16 M13.5 499.54H16 M11.5 504.96H16 M13.5 510.37H16 M11.5 515.79H16 M13.5 521.21H16 M11.5 526.63H16 M13.5 532.05H16 M11.5 537.46H16 M13.5 542.88H16 M0 548.30H16 M13.5 553.72H16 M11.5 559.14H16 M13.5 564.55H16 M11.5 569.97H16 M13.5 575.39H16 M11.5 580.81H16 M13.5 586.23H16 M11.5 591.64H16 M13.5 597.06H16 M0 602.48H16 M13.5 607.90H16 M11.5 613.32H16 M13.5 618.73H16 M11.5 624.15H16 M13.5 629.57H16 M11.5 634.99H16 M13.5 640.41H16 M11.5 645.82H16 M13.5 651.24H16 M0 656.66H16 M13.5 662.08H16 M11.5 667.50H16 M13.5 672.91H16 M11.5 678.33H16 M13.5 683.75H16 M11.5 689.17H16 M13.5 694.59H16 M11.5 700.00H16 M13.5 705.42H16 M0 710.84H16 M13.5 716.26H16 M11.5 721.68H16 M13.5 727.09H16 M11.5 732.51H16 M13.5 737.93H16 M11.5 743.35H16 M13.5 748.77H16 M11.5 754.18H16 M13.5 759.60H16 M0 765.02H16 M13.5 770.44H16 M11.5 775.86H16 M13.5 781.27H16 M11.5 786.69H16 M13.5 792.11H16 M11.5 797.53H16 M13.5 802.95H16 M11.5 808.36H16 M13.5 813.78H16 M0 819.20H16 M13.5 824.62H16 M11.5 830.04H16 M13.5 835.45H16 M11.5 840.87H16 M13.5 846.29H16" stroke="#cfcfcf" stroke-width="1" fill="none"/><text x="3.4" y="15.7">0</text><text x="3.4" y="69.9">5</text><text x="3.4" y="77.6">0</text><text x="3.4" y="124.1">1</text><text x="3.4" y="131.8">0</text><text x="3.4" y="139.5">0</text><text x="3.4" y="178.2">1</text><text x="3.4" y="185.9">5</text><text x="3.4" y="193.6">0</text><text x="3.4" y="232.4">2</text><text x="3.4" y="240.1">0</text><text x="3.4" y="247.8">0</text><text x="3.4" y="286.6">2</text><text x="3.4" y="294.3">5</text><text x="3.4" y="302.0">0</text><text x="3.4" y="340.8">3</text><text x="3.4" y="348.5">0</text><text x="3.4" y="356.2">0</text><text x="3.4" y="395.0">3</text><text x="3.4" y="402.7">5</text><text x="3.4" y="410.4">0</text><text x="3.4" y="449.1">4</text><text x="3.4" y="456.8">0</text><text x="3.4" y="464.5">0</text><text x="3.4" y="503.3">4</text><text x="3.4" y="511.0">5</text><text x="3.4" y="518.7">0</text><text x="3.4" y="557.5">5</text><text x="3.4" y="565.2">0</text><text x="3.4" y="572.9">0</text><text x="3.4" y="611.7">5</text><text x="3.4" y="619.4">5</text><text x="3.4" y="627.1">0</text><text x="3.4" y="665.9">6</text><text x="3.4" y="673.6">0</text><text x="3.4" y="681.3">0</text><text x="3.4" y="720.0">6</text><text x="3.4" y="727.7">5</text><text x="3.4" y="735.4">0</text><text x="3.4" y="774.2">7</text><text x="3.4" y="781.9">0</text><text x="3.4" y="789.6">0</text><text x="3.4" y="828.4">7</text><text x="3.4" y="836.1">5</text><text x="3.4" y="843.8">0</text><path d="M0 494.5H16" stroke="#e0e0e0" stroke-dasharray="1 1"/></svg>
<!-- tab labels -->
<div class="abs" style="left:67px;top:87px;font-size:12px;line-height:13px;color:#d8d8d8;font-weight:bold">×</div>
<div class="abs" style="left:82px;top:88px;font-size:11px;font-weight:bold;line-height:13px;color:#a9a9a9;letter-spacing:-.12px;white-space:nowrap">Fotobuch-Tipps.indd @ 75 %</div>
<div class="abs" style="left:247px;top:87px;font-size:12px;line-height:13px;color:#e0e0e0;font-weight:bold">×</div>
<div class="abs" style="left:263px;top:88px;font-size:11px;font-weight:bold;line-height:13px;color:#efefef;white-space:nowrap">*Unbenannt-6 @ 85 %</div>
<!-- ruler corner cross -->
<svg class="abs" style="left:57px;top:103px" width="17" height="17" viewBox="0 0 17 17"><path d="M5.500 1v15M1 5.500h15" stroke="#c4c4c4" stroke-dasharray="1 1" fill="none"/><path d="M16.500 1v16M1 16.500h16" stroke="#9a9a9a" fill="none"/></svg>
<!-- toolbar header -->
<svg class="abs" style="left:4px;top:86px" width="9" height="7" viewBox="0 0 9 7"><path d="M4 0v6.500L0 3.250zM8.500 0v6.500L4.500 3.250z" fill="#d6d6d6"/></svg>
<div class="abs" style="left:18px;top:99px;width:20px;height:4px;background:repeating-linear-gradient(90deg,#1c1c1c 0,#1c1c1c 1px,transparent 1px,transparent 2px)"></div>
<!-- tool separators -->
<div class="abs" style="left:0;top:177px;width:55px;height:2px;border-top:1px solid #363636;border-bottom:1px solid #575757"></div>
<div class="abs" style="left:0;top:247px;width:55px;height:2px;border-top:1px solid #363636;border-bottom:1px solid #575757"></div>
<div class="abs" style="left:0;top:296px;width:55px;height:2px;border-top:1px solid #363636;border-bottom:1px solid #575757"></div>
<div class="abs" style="left:0;top:345px;width:55px;height:2px;border-top:1px solid #363636;border-bottom:1px solid #575757"></div>
<!-- selection tool (active) -->
<div class="abs" style="left:3px;top:112px;width:24px;height:20px;background:#2d2d2d;border-radius:1px"></div>
<svg class="abs" style="left:9px;top:113px" width="13" height="18" viewBox="0 0 13 18"><path d="M1.500 1.500v13l3.200-2.800 2.200 4.800 2-.9-2.200-4.700 4.300-.3z" fill="#1a1a1a" stroke="#e8e8e8" stroke-width="1.300" stroke-linejoin="miter"/></svg>
<svg class="abs" style="left:35px;top:113px" width="13" height="18" viewBox="0 0 13 18"><path d="M1.500 1v13.500l3.300-3 2.300 5 2.200-1-2.300-4.900 4.300-.3z" fill="#d6d6d6"/></svg>
<!-- page tool -->
<svg class="abs" style="left:9px;top:136px" width="16" height="16" viewBox="0 0 16 16"><path d="M0 0h7l4 4v10H0z" fill="#cfcfcf"/><path d="M7 0v4h4z" fill="#ececec" stroke="#484848" stroke-width=".7"/><path d="M9.500 7.500v8l2-1.800 1.200 2.300 1.300-.6-1.200-2.300 2.700-.2z" fill="#e8e8e8" stroke="#4a4a4a" stroke-width=".6"/></svg>
<!-- gap tool -->
<svg class="abs" style="left:30px;top:136px" width="21" height="15" viewBox="0 0 21 15" stroke="#d6d6d6" fill="none"><path d="M1 0v15M20 0v15" stroke-width="1.800"/><path d="M5 7.500h11" stroke-width="1.600"/><path d="M3.500 7.500l4-3.500v7zM17.500 7.500l-4-3.500v7z" fill="#d6d6d6" stroke="none"/></svg>
<!-- content collector / placer -->
<svg class="abs" style="left:8px;top:155px" width="15" height="18" viewBox="0 0 15 18" fill="none" stroke="#d6d6d6"><path d="M1 8v8.500h13V8" stroke-width="2"/><path d="M3.500 9.500h2v2h-2zM6.500 9.500h2v2h-2zM9.500 9.500h2v2h-2zM3.500 12.500h2v2h-2zM6.500 12.500h2v2h-2zM9.500 12.500h2v2h-2z" fill="#e2e2e2" stroke="none"/><path d="M3 1.500l4 4" stroke-width="2"/><path d="M9.500 8L4.500 7l4-4z" fill="#d6d6d6" stroke="none"/></svg>
<svg class="abs" style="left:33px;top:155px" width="15" height="18" viewBox="0 0 15 18" fill="none" stroke="#d6d6d6"><path d="M1 8v8.500h13V8" stroke-width="2"/><path d="M3.500 9.500h2v2h-2zM6.500 9.500h2v2h-2zM9.500 9.500h2v2h-2zM3.500 12.500h2v2h-2zM6.500 12.500h2v2h-2zM9.500 12.500h2v2h-2z" fill="#e2e2e2" stroke="none"/><path d="M8 7l4-4" stroke-width="2"/><path d="M14.500 .5l-1 5-4-4z" fill="#d6d6d6" stroke="none"/></svg>
<!-- T -->
<svg class="abs" style="left:8px;top:184px" width="18" height="17" viewBox="0 0 18 17"><text x="0" y="14" font-family="Liberation Serif, serif" font-size="19" fill="#d8d8d8">T</text><path d="M17 12.500v4h-4z" fill="#d8d8d8"/></svg>
<svg class="abs" style="left:33px;top:185px" width="14" height="14" viewBox="0 0 14 14"><path d="M.5 13.500L13.500 .5" stroke="#d8d8d8" stroke-width="1.400"/></svg>
<!-- pen -->
<svg class="abs" style="left:7px;top:203px" width="19" height="19" viewBox="0 0 19 19"><path d="M0 17.500L3 8l6.500-3 4.500 4.500-3 6.500z" fill="#d0d0d0"/><path d="M0 17.500l6.500-6.500" stroke="#4a4a4a" stroke-width="1"/><circle cx="7.300" cy="10.200" r="1.200" fill="#4a4a4a"/><path d="M10.500 4l2.500-3 5 5-3 2.500z" fill="#d0d0d0"/><path d="M18 14.500v4h-4z" fill="#d8d8d8"/></svg>
<!-- pencil -->
<svg class="abs" style="left:32px;top:204px" width="18" height="18" viewBox="0 0 18 18"><path d="M0 16.500l1.500-5L11 2l3.500 3.500L5 15z" fill="#9a9a9a"/><path d="M0 16.500l1.500-5 3.500 3.500z" fill="#d8d8d8"/><path d="M11 2l1.200-1.200a1.400 1.400 0 0 1 2 0l1.500 1.500a1.400 1.400 0 0 1 0 2L14.500 5.500z" fill="#d8d8d8"/><path d="M17.500 13.500v4h-4z" fill="#d8d8d8"/></svg>
<!-- frame / rect -->
<svg class="abs" style="left:8px;top:228px" width="18" height="16" viewBox="0 0 18 16"><rect x=".75" y=".75" width="13.500" height="11.500" fill="none" stroke="#d6d6d6" stroke-width="1.500"/><path d="M1 1l13 11M14 1L1 12" stroke="#d6d6d6" stroke-width="1.100"/><path d="M17.500 11.500v4h-4z" fill="#d8d8d8"/></svg>
<svg class="abs" style="left:33px;top:228px" width="18" height="16" viewBox="0 0 18 16"><rect x=".75" y=".75" width="13.500" height="11.500" fill="#808080" stroke="#d6d6d6" stroke-width="1.500"/><path d="M17.500 11.500v4h-4z" fill="#d8d8d8"/></svg>
<!-- scissors -->
<svg class="abs" style="left:7px;top:254px" width="17" height="15" viewBox="0 0 17 15" fill="none" stroke="#d6d6d6"><path d="M.5 2.500L12 9M.5 10.500L12 4" stroke-width="1.600"/><circle cx="13.500" cy="3" r="2.200" stroke-width="1.300"/><circle cx="13.500" cy="11" r="2.200" stroke-width="1.300"/></svg>
<!-- free transform -->
<svg class="abs" style="left:32px;top:254px" width="19" height="17" viewBox="0 0 19 17"><rect x="5" y="2" width="10.500" height="10.500" fill="none" stroke="#d6d6d6" stroke-width="1.400" stroke-dasharray="2.200 1.600"/><path d="M0 .5l9.500 6.500-5 1-2.500 4.500z" fill="#d6d6d6"/><path d="M18.500 12.500v4h-4z" fill="#d8d8d8"/></svg>
<!-- gradient swatch -->
<svg class="abs" style="left:7px;top:277px" width="17" height="13" viewBox="0 0 17 13"><defs><linearGradient id="gg1"><stop offset="0" stop-color="#2e2e2e"/><stop offset="1" stop-color="#d8d8d8"/></linearGradient></defs><rect x=".6" y=".6" width="15.800" height="11.800" fill="url(#gg1)" stroke="#d6d6d6" stroke-width="1.200"/></svg>
<!-- gradient feather -->
<svg class="abs" style="left:32px;top:277px" width="17" height="13" viewBox="0 0 17 13"><defs><linearGradient id="gg2" x1="0" y1="0" x2="0" y2="1"><stop offset="0" stop-color="#4a4a4a" stop-opacity="0"/><stop offset="1" stop-color="#4a4a4a" stop-opacity=".9"/></linearGradient></defs><rect x=".6" y=".6" width="15.800" height="11.800" fill="#4a4a4a" stroke="#d6d6d6" stroke-width="1.200"/><path d="M1 1h3v3H1zM7 1h3v3H7zM13 1h3v3h-3zM4 4h3v3H4zM10 4h3v3h-3zM1 7h3v3H1zM7 7h3v3H7zM13 7h3v3h-3zM4 10h3v2H4zM10 10h3v2h-3z" fill="#e0e0e0"/><rect x="1" y="1" width="15" height="11" fill="url(#gg2)"/></svg>
<!-- note -->
<svg class="abs" style="left:8px;top:304px" width="15" height="15" viewBox="0 0 15 15"><path d="M0 0h14.500v9.500l-5 5H0z" fill="#d0d0d0"/><path d="M14.500 9.500h-5v5z" fill="#7a7a7a"/><path d="M2.500 4h9.500M2.500 6.500h9.500M2.500 9h5" stroke="#4a4a4a" stroke-width="1.200"/></svg>
<!-- eyedropper -->
<svg class="abs" style="left:31px;top:303px" width="20" height="17" viewBox="0 0 20 17"><path d="M11.500 1.200a2 2 0 0 1 3 0a2 2 0 0 1 .2 3L12.500 6.500 10 4z" fill="#d6d6d6"/><path d="M9 3.500l4 4" stroke="#d6d6d6" stroke-width="1.500"/><path d="M10 5.500L3.500 12 2 15" stroke="#d6d6d6" stroke-width="1.300" fill="none" stroke-dasharray="2 1"/><rect x="3.500" y="13" width="11" height="3" fill="none" stroke="#d6d6d6" stroke-width="1"/><path d="M6.500 13v3M9.500 13v3M12 13v3" stroke="#d6d6d6"/><path d="M19.500 12.500v4h-4z" fill="#d8d8d8"/></svg>
<!-- hand -->
<svg class="abs" style="left:7px;top:323px" width="18" height="18" viewBox="0 0 18 18"><path d="M5 17C4 14 1.500 12 .5 9.500C.3 8.300 1.800 7.800 2.800 8.800L4.500 11L3.200 3.500C3 2 5 1.600 5.300 3.100L6.600 8L6.800 1.600C6.800 .1 8.900 .1 8.900 1.600L9.200 8L11 2.300C11.400 .9 13.300 1.400 13 2.900L11.800 8.800L14.500 5C15.300 3.900 16.900 4.900 16.200 6.100L13.500 11.500C13 14 12.500 15.500 12 17Z" fill="#d6d6d6" stroke="#484848" stroke-width=".4"/></svg>
<!-- zoom -->
<svg class="abs" style="left:33px;top:323px" width="17" height="17" viewBox="0 0 17 17"><circle cx="6.300" cy="6.300" r="5" fill="#8a8a8a" stroke="#d6d6d6" stroke-width="1.600"/><path d="M10 10l5.500 5.500" stroke="#d6d6d6" stroke-width="2.600" stroke-linecap="round"/></svg>
<!-- fill / stroke -->
<svg class="abs" style="left:20px;top:366px" width="27" height="27" viewBox="0 0 27 27"><rect x=".5" y=".5" width="26" height="26" fill="#fff" stroke="#4a4a4a"/><rect x="7" y="7" width="12.500" height="12.500" fill="#4a4a4a" stroke="#707070"/><path d="M2 25L25 2" stroke="#d5361b" stroke-width="2"/></svg>
<svg class="abs" style="left:7px;top:354px" width="28" height="28" viewBox="0 0 28 28"><rect x="1" y="1" width="26" height="26" fill="#fff" stroke="#7c7c7c" stroke-width="2"/><path d="M2.500 25.500L25.500 2.500" stroke="#d5361b" stroke-width="2"/></svg>
<svg class="abs" style="left:38px;top:352px" width="11" height="12" viewBox="0 0 11 12" fill="none" stroke="#d6d6d6" stroke-width="1.300"><path d="M2.500 3.500h2.500a3.500 3.500 0 0 1 3.500 3.500v2"/><path d="M4 .5L.8 3.500 4 6.500z" fill="#d6d6d6" stroke="none"/><path d="M5.500 8l3 3.500 3-3.500z" fill="#d6d6d6" stroke="none"/></svg>
<svg class="abs" style="left:5px;top:385px" width="13" height="13" viewBox="0 0 13 13"><rect x="4.500" y="4.500" width="8" height="8" fill="#1a1a1a" stroke="#e0e0e0"/><rect x="7" y="7" width="3" height="3" fill="#4a4a4a"/><rect x=".5" y=".5" width="8" height="8" fill="#fff" stroke="#2a2a2a"/><path d="M1 8L8 1" stroke="#d5361b" stroke-width="1.200"/></svg>
<!-- formatting affects -->
<div class="abs" style="left:8px;top:399px;width:16px;height:15px;background:#333"></div>
<div class="abs" style="left:12px;top:402px;width:10px;height:10px;background:#5c5c5c;border:1px solid #dcdcdc"></div>
<div class="abs" style="left:33px;top:398px;font-family:'Liberation Serif',serif;font-weight:bold;font-size:14px;line-height:16px;color:#dcdcdc">T</div>
<!-- apply color -->
<div class="abs" style="left:6px;top:424px;width:11px;height:11px;background:#000;border:1px solid #666"></div>
<div class="abs" style="left:23px;top:424px;width:10px;height:11px;background:linear-gradient(90deg,#f4f4f4,#222);border:1px solid #666"></div>
<div class="abs" style="left:36px;top:421px;width:17px;height:17px;background:#333"></div>
<svg class="abs" style="left:39px;top:424px" width="11" height="11" viewBox="0 0 11 11"><rect x="0" y="0" width="11" height="11" fill="#fff"/><path d="M.5 10.500L10.500 .5" stroke="#d5361b" stroke-width="2"/></svg>
<!-- view modes -->
<svg class="abs" style="left:10px;top:447px" width="12" height="12" viewBox="0 0 12 12" fill="none" stroke="#dcdcdc"><rect x=".6" y=".6" width="10.800" height="10.800" stroke-width="1.200"/><path d="M1 3h10" stroke-width="1"/><rect x="2.500" y="5" width="4" height="2" fill="#dcdcdc" stroke="none"/><rect x="5.500" y="7" width="4" height="2.500" fill="#dcdcdc" stroke="none"/></svg>
<div class="abs" style="left:28px;top:442px;width:25px;height:21px;background:#343434"></div>
<svg class="abs" style="left:35px;top:447px" width="17" height="15" viewBox="0 0 17 15" fill="none" stroke="#dcdcdc"><rect x=".6" y=".6" width="11.300" height="10.800" stroke-width="1.200"/><path d="M1 3h11" stroke-width="1"/><path d="M16.500 10v4h-4z" fill="#dcdcdc" stroke="none"/></svg>

<!-- dock header -->
<div class="abs" style="left:1754px;top:84px;width:164px;height:12px;background:#303030;border-bottom:1px solid #262626"></div>
<svg class="abs" style="left:1907px;top:86px" width="9" height="7" viewBox="0 0 9 7"><path d="M4 0v6.500L0 3.250zM8.500 0v6.500L4.500 3.250z" fill="#d6d6d6"/></svg>
<div class="abs" style="left:1754px;top:96px;width:164px;height:97px;background:#4b4b4b;border-top:1px solid #5e5e5e;border-bottom:1px solid #2b2b2b"></div>
<div class="abs" style="left:1826px;top:99px;width:20px;height:4px;background:repeating-linear-gradient(90deg,#1c1c1c 0,#1c1c1c 1px,transparent 1px,transparent 2px)"></div>
<svg class="abs" style="left:1765px;top:112px" width="18" height="18" viewBox="0 0 18 18"><path d="M0 4l3-3h4.500v13H0zM17 4l-3-3H9.500v13H17z" fill="#d8d8d8"/><path d="M8.500 0v16" stroke="#d8d8d8" stroke-width="1"/></svg>
<div class="abs" style="left:1791px;top:114px;font-size:11px;font-weight:bold;line-height:13px;color:#e2e2e2;white-space:nowrap;letter-spacing:0">Seiten</div>
<svg class="abs" style="left:1765px;top:141px" width="18" height="18" viewBox="0 0 18 18"><path d="M8.500 0L17 4.500 8.500 9 0 4.500z" fill="#d8d8d8"/><path d="M1.500 8.500L8.500 12.200 15.500 8.500 17 9.300 8.500 14 0 9.300z" fill="#d8d8d8"/></svg>
<div class="abs" style="left:1791px;top:142px;font-size:11px;font-weight:bold;line-height:13px;color:#e2e2e2;white-space:nowrap;letter-spacing:0">Ebenen</div>
<svg class="abs" style="left:1765px;top:169px" width="18" height="18" viewBox="0 0 18 18"><g fill="none" stroke="#d8d8d8" stroke-width="1.800"><path d="M6 3.500H4a3 3 0 0 0 0 6.500h2M11 3.500h2a3 3 0 0 1 0 6.500h-2M5 6.750h7"/></g></svg>
<div class="abs" style="left:1791px;top:170px;font-size:11px;font-weight:bold;line-height:13px;color:#e2e2e2;white-space:nowrap;letter-spacing:0">Verknüpfungen</div>
<div class="abs" style="left:1754px;top:193px;width:164px;height:97px;background:#4b4b4b;border-top:1px solid #5e5e5e;border-bottom:1px solid #2b2b2b"></div>
<div class="abs" style="left:1826px;top:196px;width:20px;height:4px;background:repeating-linear-gradient(90deg,#1c1c1c 0,#1c1c1c 1px,transparent 1px,transparent 2px)"></div>
<svg class="abs" style="left:1765px;top:210.5px" width="18" height="18" viewBox="0 0 18 18"><path d="M0 1.500h17" stroke="#d8d8d8" stroke-width="1"/><path d="M0 6h17" stroke="#d8d8d8" stroke-width="2"/><path d="M0 11.500h17" stroke="#d8d8d8" stroke-width="3"/></svg>
<div class="abs" style="left:1791px;top:211px;font-size:11px;font-weight:bold;line-height:13px;color:#e2e2e2;white-space:nowrap;letter-spacing:0">Kontur</div>
<svg class="abs" style="left:1765px;top:239.5px" width="18" height="18" viewBox="0 0 18 18"><rect x=".5" y=".5" width="16" height="10" fill="none" stroke="#d8d8d8"/><path d="M.5 5.500h16M5.800 .5v10M11.200 .5v10" stroke="#d8d8d8"/><rect x="1" y="1" width="4.300" height="4" fill="#222"/><rect x="6.300" y="1" width="4.400" height="4" fill="#555"/><rect x="11.700" y="1" width="4.300" height="4" fill="#888"/></svg>
<div class="abs" style="left:1791px;top:239px;font-size:11px;font-weight:bold;line-height:13px;color:#e2e2e2;white-space:nowrap;letter-spacing:0">Farbfelder</div>
<svg class="abs" style="left:1765px;top:267px" width="18" height="18" viewBox="0 0 18 18"><defs><linearGradient id="dg1"><stop offset="0" stop-color="#222"/><stop offset="1" stop-color="#e4e4e4"/></linearGradient></defs><rect x=".5" y=".5" width="16" height="11" fill="url(#dg1)" stroke="#d8d8d8"/></svg>
<div class="abs" style="left:1791px;top:267px;font-size:11px;font-weight:bold;line-height:13px;color:#e2e2e2;white-space:nowrap;letter-spacing:0">Verlauf</div>
<div class="abs" style="left:1754px;top:290px;width:164px;height:41px;background:#4b4b4b;border-top:1px solid #5e5e5e;border-bottom:1px solid #2b2b2b"></div>
<div class="abs" style="left:1826px;top:293px;width:20px;height:4px;background:repeating-linear-gradient(90deg,#1c1c1c 0,#1c1c1c 1px,transparent 1px,transparent 2px)"></div>
<svg class="abs" style="left:1765px;top:306px" width="18" height="18" viewBox="0 0 18 18"><text x="1.500" y="13" font-family="Liberation Serif, serif" font-style="italic" font-size="17" fill="#d8d8d8" stroke="#d8d8d8" stroke-width=".45">fx</text></svg>
<div class="abs" style="left:1791px;top:308px;font-size:11px;font-weight:bold;line-height:13px;color:#e2e2e2;white-space:nowrap;letter-spacing:0">Effekte</div>
<div class="abs" style="left:1754px;top:331px;width:164px;height:97px;background:#4b4b4b;border-top:1px solid #5e5e5e;border-bottom:1px solid #2b2b2b"></div>
<div class="abs" style="left:1826px;top:334px;width:20px;height:4px;background:repeating-linear-gradient(90deg,#1c1c1c 0,#1c1c1c 1px,transparent 1px,transparent 2px)"></div>
<svg class="abs" style="left:1765px;top:346px" width="18" height="18" viewBox="0 0 18 18"><rect x=".5" y="7.500" width="5.500" height="5" fill="none" stroke="#d8d8d8"/><rect x="3.500" y="10.500" width="5.500" height="5" fill="#4a4a4a" stroke="#d8d8d8"/><text x="7.500" y="11" font-family="Liberation Sans, sans-serif" font-size="14.500" fill="#d8d8d8" stroke="#d8d8d8" stroke-width=".3">A</text></svg>
<div class="abs" style="left:1791px;top:349px;font-size:11px;font-weight:bold;line-height:13px;color:#e2e2e2;white-space:nowrap;letter-spacing:0">Zeichenformate</div>
<svg class="abs" style="left:1765px;top:375px" width="18" height="18" viewBox="0 0 18 18"><rect x=".5" y="7.500" width="5.500" height="5" fill="none" stroke="#d8d8d8"/><rect x="3.500" y="10.500" width="5.500" height="5" fill="#4a4a4a" stroke="#d8d8d8"/><path d="M12.800 .5v13M15.800 .5v13M10 .6h7" stroke="#d8d8d8" stroke-width="1.300"/><path d="M12.800 .5h-1.300a3.800 3.800 0 0 0 0 7.600h1.300z" fill="#d8d8d8"/></svg>
<div class="abs" style="left:1791px;top:377px;font-size:11px;font-weight:bold;line-height:13px;color:#e2e2e2;white-space:nowrap;letter-spacing:0">Absatzformate</div>
<svg class="abs" style="left:1765px;top:403px" width="18" height="18" viewBox="0 0 18 18"><rect x=".5" y="7.500" width="5.500" height="5" fill="none" stroke="#d8d8d8"/><rect x="3.500" y="10.500" width="5.500" height="5" fill="#4a4a4a" stroke="#d8d8d8"/><path d="M6 .5h3.500a1.800 1.800 0 0 0 3.500 0h3.500v12H8.500V7H6z" fill="#8c8c8c" stroke="#d8d8d8"/></svg>
<div class="abs" style="left:1791px;top:405px;font-size:11px;font-weight:bold;line-height:13px;color:#e2e2e2;white-space:nowrap;letter-spacing:0">Objektformate</div>
<div class="abs" style="left:1754px;top:428px;width:164px;height:97px;background:#4b4b4b;border-top:1px solid #5e5e5e;border-bottom:1px solid #2b2b2b"></div>
<div class="abs" style="left:1826px;top:431px;width:20px;height:4px;background:repeating-linear-gradient(90deg,#1c1c1c 0,#1c1c1c 1px,transparent 1px,transparent 2px)"></div>
<svg class="abs" style="left:1765px;top:444.5px" width="18" height="18" viewBox="0 0 18 18"><rect x=".6" y=".6" width="14.800" height="13.800" fill="none" stroke="#d8d8d8" stroke-width="1.200"/><path d="M1 4h14M1 7.500h14M1 11h14M5 1v14" stroke="#d8d8d8" stroke-width="1.100"/></svg>
<div class="abs" style="left:1791px;top:446px;font-size:11px;font-weight:bold;line-height:13px;color:#e2e2e2;white-space:nowrap;letter-spacing:0">Tabelle</div>
<svg class="abs" style="left:1765px;top:472.5px" width="18" height="18" viewBox="0 0 18 18"><rect x=".5" y="7" width="5.500" height="5" fill="none" stroke="#d8d8d8"/><rect x="3.500" y="10" width="5.500" height="5" fill="#4a4a4a" stroke="#d8d8d8"/><rect x="6" y=".6" width="10.500" height="12" fill="#4a4a4a" stroke="#d8d8d8" stroke-width="1.200"/><path d="M6 4h10M9.500 7h7M9.500 10h7M9.500 4v9" stroke="#d8d8d8" stroke-width="1.100"/></svg>
<div class="abs" style="left:1791px;top:474px;font-size:11px;font-weight:bold;line-height:13px;color:#e2e2e2;white-space:nowrap;letter-spacing:0">Tabellenformate</div>
<svg class="abs" style="left:1765px;top:500.5px" width="18" height="18" viewBox="0 0 18 18"><rect x=".5" y="7" width="5.500" height="5" fill="none" stroke="#d8d8d8"/><rect x="3.500" y="10" width="5.500" height="5" fill="#4a4a4a" stroke="#d8d8d8"/><rect x="6" y=".6" width="10.500" height="12" fill="#4a4a4a" stroke="#d8d8d8" stroke-width="1.200"/><path d="M6 4.500h10.500M11 4.500v8" stroke="#d8d8d8" stroke-width="1.100"/><rect x="11.500" y="5" width="4.500" height="4" fill="#d8d8d8"/></svg>
<div class="abs" style="left:1791px;top:502px;font-size:11px;font-weight:bold;line-height:13px;color:#e2e2e2;white-space:nowrap;letter-spacing:0">Zellenformate</div>
<div class="abs" style="left:1754px;top:525px;width:164px;height:69px;background:#4b4b4b;border-top:1px solid #5e5e5e;border-bottom:1px solid #2b2b2b"></div>
<div class="abs" style="left:1826px;top:528px;width:20px;height:4px;background:repeating-linear-gradient(90deg,#1c1c1c 0,#1c1c1c 1px,transparent 1px,transparent 2px)"></div>
<svg class="abs" style="left:1765px;top:540.5px" width="18" height="18" viewBox="0 0 18 18"><path d="M5 0h6l3 3v5H5z" fill="none" stroke="#d8d8d8" stroke-width="1.100"/><path d="M0 5.500h5M3.500 3l3 2.500-3 2.500z" fill="#d8d8d8" stroke="#d8d8d8" stroke-width="1.200"/><circle cx="12" cy="12.500" r="3.200" fill="none" stroke="#d8d8d8" stroke-width="2" stroke-dasharray="1.700 1.200"/><circle cx="12" cy="12.500" r="2" fill="#d8d8d8"/><circle cx="12" cy="12.500" r=".9" fill="#4a4a4a"/></svg>
<div class="abs" style="left:1791px;top:543px;font-size:11px;font-weight:bold;line-height:13px;color:#e2e2e2;white-space:nowrap;letter-spacing:-.1px">Datenzusammenführ...</div>
<div class="abs" style="left:1758px;top:565px;width:156px;height:23px;background:#333;border-radius:2px"></div>
<svg class="abs" style="left:1765px;top:567.5px" width="18" height="18" viewBox="0 0 18 18"><text x="1" y="15.500" font-family="Liberation Serif, serif" font-weight="bold" font-style="italic" font-size="21" fill="#e6e6e6" stroke="#e6e6e6" stroke-width=".8">S</text></svg>
<div class="abs" style="left:1791px;top:571px;font-size:11px;font-weight:bold;line-height:13px;color:#e2e2e2;white-space:nowrap;letter-spacing:0">Skripte</div>
<div class="abs" style="left:1754px;top:594px;width:164px;height:97px;background:#4b4b4b;border-top:1px solid #5e5e5e;border-bottom:1px solid #2b2b2b"></div>
<div class="abs" style="left:1826px;top:597px;width:20px;height:4px;background:repeating-linear-gradient(90deg,#1c1c1c 0,#1c1c1c 1px,transparent 1px,transparent 2px)"></div>
<svg class="abs" style="left:1765px;top:609px" width="18" height="18" viewBox="0 0 18 18"><text x="0" y="15" font-family="Liberation Serif, serif" font-style="italic" font-size="20" fill="#d8d8d8">A</text></svg>
<div class="abs" style="left:1791px;top:612px;font-size:11px;font-weight:bold;line-height:13px;color:#e2e2e2;white-space:nowrap;letter-spacing:0">Glyphen</div>
<svg class="abs" style="left:1765px;top:637.5px" width="18" height="18" viewBox="0 0 18 18"><text x="0" y="14.500" font-family="Liberation Sans, sans-serif" font-size="17" fill="#d8d8d8">A</text><path d="M15.500 0v17" stroke="#d8d8d8" stroke-width="1.200"/></svg>
<div class="abs" style="left:1791px;top:640px;font-size:11px;font-weight:bold;line-height:13px;color:#e2e2e2;white-space:nowrap;letter-spacing:0">Zeichen</div>
<svg class="abs" style="left:1765px;top:666px" width="18" height="18" viewBox="0 0 18 18"><path d="M8.500 1v14M11.500 1v14M6 1h8" stroke="#d8d8d8" stroke-width="1.400"/><path d="M8.500 1H7a4 4 0 0 0 0 8h1.500z" fill="#d8d8d8"/></svg>
<div class="abs" style="left:1791px;top:668px;font-size:11px;font-weight:bold;line-height:13px;color:#e2e2e2;white-space:nowrap;letter-spacing:0">Absatz</div>
<div class="abs" style="left:1754px;top:691px;width:164px;height:41px;background:#4b4b4b;border-top:1px solid #5e5e5e;border-bottom:1px solid #2b2b2b"></div>
<div class="abs" style="left:1826px;top:694px;width:20px;height:4px;background:repeating-linear-gradient(90deg,#1c1c1c 0,#1c1c1c 1px,transparent 1px,transparent 2px)"></div>
<svg class="abs" style="left:1765px;top:707px" width="18" height="18" viewBox="0 0 18 18"><path d="M0 .6h17M0 3.500h3M14 3.500h3M0 6.400h3M14 6.400h3M0 9.300h3M14 9.300h3M0 12.200h17M0 15h17" stroke="#d8d8d8" stroke-width="1.100"/><rect x="4" y="3" width="9" height="7.500" fill="#777" stroke="#d8d8d8" stroke-width="1"/><circle cx="8.500" cy="6.700" r="2.400" fill="#d8d8d8"/></svg>
<div class="abs" style="left:1791px;top:709px;font-size:11px;font-weight:bold;line-height:13px;color:#e2e2e2;white-space:nowrap;letter-spacing:0">Textumfluss</div>
<!-- pathfinder / info floating panel -->
<div class="abs" style="left:122px;top:436px;width:209px;height:361px;background:#4a4a4a;border:1px solid #262626;border-radius:4px 4px 0 0;box-shadow:0 1px 4px rgba(0,0,0,.35)"></div>
<div class="abs" style="left:123px;top:437px;width:207px;height:12px;background:#2b2b2b;border-radius:3px 3px 0 0"></div>
<div class="abs" style="left:123px;top:449px;width:207px;height:18px;background:#303030;border-bottom:1px solid #2a2a2a"></div>
<svg class="abs" style="left:128px;top:441px" width="7" height="6" viewBox="0 0 7 6"><path d="M.5 .3L6 5.700M6 .3L.5 5.700" stroke="#e0e0e0" stroke-width="1.300"/></svg>
<svg class="abs" style="left:318px;top:440px" width="9" height="7" viewBox="0 0 9 7"><path d="M4 0v6.500L0 3.250zM8.500 0v6.500L4.500 3.250z" fill="#d6d6d6"/></svg>
<div class="abs" style="left:123px;top:450px;width:70px;height:17px;background:#363636;border-right:1px solid #2a2a2a"></div>
<div class="abs" style="left:130px;top:452px;font-size:11px;font-weight:bold;line-height:13px;color:#9c9c9c;letter-spacing:-.1px">Ausrichten</div>
<div class="abs" style="left:193px;top:450px;width:66px;height:18px;background:#4a4a4a;border-right:1px solid #2a2a2a"></div>
<div class="abs" style="left:200px;top:452px;font-size:11px;font-weight:bold;line-height:13px;color:#f0f0f0;letter-spacing:-.1px">Pathfinder</div>
<div class="sm" style="left:127px;top:473px">Pfade:</div>
<!-- pfade icons -->
<svg class="pi" style="left:132px;top:489px" width="16" height="14" viewBox="0 0 16 14" fill="none" stroke="#e0e0e0"><path d="M1.500 12C2 6 7 2 13.500 1.500" stroke-dasharray="1.500 1.500" stroke-width="1.200"/><rect x="12" y="0" width="3" height="3" fill="#e0e0e0" stroke="none"/><rect x="0" y="11" width="3" height="3" fill="#e0e0e0" stroke="none"/></svg>
<svg class="pi" style="left:173px;top:489px" width="18" height="14" viewBox="0 0 18 14" fill="none" stroke="#e0e0e0" stroke-width="1.200"><ellipse cx="8" cy="8" rx="7.300" ry="5.300"/><path d="M9 8L15 1.500M12 8.500L16.500 3.500"/></svg>
<svg class="pi" style="left:215px;top:489px" width="18" height="14" viewBox="0 0 18 14" fill="none" stroke="#e0e0e0" stroke-width="1.200"><ellipse cx="8.500" cy="8" rx="7.500" ry="5.300"/><path d="M8 2.700A7.500 5.300 0 0 1 16 8" stroke="#4a4a4a" stroke-width="2"/><path d="M8 2.700A7.500 5.300 0 0 1 16 8" stroke-dasharray="1.200 1.200"/><rect x="6.500" y="1" width="3" height="3" fill="#e0e0e0" stroke="none"/><rect x="14.500" y="6.500" width="3" height="3" fill="#e0e0e0" stroke="none"/></svg>
<svg class="pi" style="left:258px;top:489px" width="17" height="14" viewBox="0 0 17 14" fill="none" stroke="#e0e0e0" stroke-width="1.200"><path d="M5.500 1.500H1.500v9.500M11.500 11.500h4V2M1.500 11l1 1h2.500M15.500 2l-1-1h-2.500"/><path d="M8.500 2.500v8" stroke-width="1"/><rect x="7" y="0" width="3" height="3" fill="#4a4a4a" stroke-width="1"/><rect x="7" y="10" width="3" height="3" fill="#4a4a4a" stroke-width="1"/><path d="M3 13l2.500-2v4zM14 0l-2.500 2v-4z" fill="#e0e0e0" stroke="none"/></svg>
<div class="hsep" style="left:127px;top:509px;width:197px"></div>
<div class="sm" style="left:127px;top:513px">Pathfinder:</div>
<svg class="pi" style="left:133px;top:529px" width="14" height="14" viewBox="0 0 14 14"><path d="M.6 .6h8.800v4h4v8.800H4.600v-4h-4z" fill="#a8a8a8" stroke="#e6e6e6" stroke-width="1.200"/><path d="M4.600 4.600h4.800v4.800H4.600z" fill="none" stroke="#d0d0d0" stroke-width=".8"/></svg>
<svg class="pi" style="left:175px;top:529px" width="14" height="14" viewBox="0 0 14 14"><path d="M.6 .6h8.800v4H4.600v4.800h-4z" fill="#8a8a8a" stroke="#e6e6e6" stroke-width="1.200"/><rect x="4.600" y="4.600" width="8.800" height="8.800" fill="none" stroke="#bdbdbd" stroke-width="1"/></svg>
<svg class="pi" style="left:217px;top:529px" width="14" height="14" viewBox="0 0 14 14"><rect x=".6" y=".6" width="8.800" height="8.800" fill="none" stroke="#bdbdbd" stroke-width="1"/><rect x="4.600" y="4.600" width="8.800" height="8.800" fill="none" stroke="#bdbdbd" stroke-width="1"/><rect x="4.600" y="4.600" width="4.800" height="4.800" fill="#b0b0b0" stroke="#e6e6e6" stroke-width="1.200"/></svg>
<svg class="pi" style="left:259px;top:529px" width="14" height="14" viewBox="0 0 14 14"><path d="M.6 .6h8.800v4h4v8.800H4.600v-4h-4z" fill="#9a9a9a" stroke="#e6e6e6" stroke-width="1.200"/><rect x="4.600" y="4.600" width="4.800" height="4.800" fill="#4a4a4a" stroke="#e6e6e6" stroke-width="1.200"/></svg>
<svg class="pi" style="left:301px;top:529px" width="14" height="14" viewBox="0 0 14 14"><rect x=".6" y=".6" width="8.800" height="8.800" fill="none" stroke="#bdbdbd" stroke-width="1"/><path d="M9.400 4.600h4v8.800H4.600v-4h4.800z" fill="#9a9a9a" stroke="#e6e6e6" stroke-width="1.200"/></svg>
<div class="hsep" style="left:127px;top:549px;width:197px"></div>
<div class="sm" style="left:127px;top:553px">Form konvertieren:</div>
<svg class="pi" style="left:133px;top:571px" width="15" height="11" viewBox="0 0 15 11" fill="none" stroke="#e0e0e0" stroke-width="1.100"><rect x=".6" y=".6" width="13.500" height="9.800"/></svg>
<svg class="pi" style="left:175px;top:571px" width="15" height="11" viewBox="0 0 15 11" fill="none" stroke="#e0e0e0" stroke-width="1.100"><rect x=".6" y=".6" width="13.500" height="9.800" rx="2.500"/></svg>
<svg class="pi" style="left:217px;top:570px" width="15" height="13" viewBox="0 0 15 13" fill="none" stroke="#e0e0e0" stroke-width="1.100"><path d="M4 .6h6.500l3.400 3.400v5l-3.400 3.400H4L.6 9V4z"/></svg>
<svg class="pi" style="left:258px;top:570px" width="16" height="13" viewBox="0 0 16 13" fill="none" stroke="#e0e0e0" stroke-width="1.100"><path d="M4.500 .6h7a2 2 0 0 0 2 2a2 2 0 0 0 1.500 2v3.800a2 2 0 0 0-1.500 2a2 2 0 0 0-2 2h-7a2 2 0 0 0-2-2a2 2 0 0 0-1.500-2V4.600a2 2 0 0 0 1.500-2a2 2 0 0 0 2-2z"/></svg>
<svg class="pi" style="left:299px;top:570px" width="18" height="13" viewBox="0 0 18 13" fill="none" stroke="#e0e0e0" stroke-width="1.100"><ellipse cx="8.800" cy="6.500" rx="8" ry="5.500"/></svg>
<svg class="pi" style="left:133px;top:593px" width="15" height="13" viewBox="0 0 15 13" fill="none" stroke="#e0e0e0" stroke-width="1.100"><path d="M7.300 1L14 12.300H.8z"/></svg>
<svg class="pi" style="left:174px;top:594px" width="16" height="12" viewBox="0 0 16 12" fill="none" stroke="#e0e0e0" stroke-width="1.100"><path d="M4.300 .6h7L15 6l-3.700 5.400h-7L.7 6z"/></svg>
<svg class="pi" style="left:217px;top:594px" width="14" height="12" viewBox="0 0 14 12" fill="none" stroke="#e0e0e0" stroke-width="1.200"><path d="M.5 11.500L13.500 .5"/></svg>
<svg class="pi" style="left:259px;top:593px" width="14" height="14" viewBox="0 0 14 14" fill="none" stroke="#e0e0e0" stroke-width="1.100"><path d="M6.500 .5v13M0 7h13"/></svg>
<div class="hsep" style="left:127px;top:613px;width:197px"></div>
<div class="sm" style="left:127px;top:617px">Punkt konvertieren:</div>
<svg class="pi" style="left:133px;top:633px" width="14" height="14" viewBox="0 0 14 14" fill="none" stroke="#e0e0e0"><path d="M3.500 3.500h9M3.500 3.500V13"/><rect x="1.500" y="1.500" width="4" height="4" fill="#8a8a8a"/></svg>
<svg class="pi" style="left:174px;top:633px" width="16" height="14" viewBox="0 0 16 14" fill="none" stroke="#e0e0e0"><path d="M4.500 3.500h9M4.500 3.500V13"/><rect x="2.500" y="1.500" width="4" height="4" fill="#8a8a8a"/><rect x="11.500" y="2.500" width="2" height="2" fill="#e0e0e0"/><rect x="3.500" y="10.500" width="2" height="2" fill="#e0e0e0"/></svg>
<svg class="pi" style="left:215px;top:632px" width="17" height="16" viewBox="0 0 17 16" fill="none" stroke="#e0e0e0"><path d="M1.500 1.500L15 14.500"/><path d="M5 3c2 2 5 4 6 12" stroke="#b0b0b0"/><rect x="4.500" y="4.500" width="4" height="4" fill="#8a8a8a"/><rect x=".5" y=".5" width="2" height="2" fill="#e0e0e0"/><rect x="13.500" y="13" width="2" height="2" fill="#e0e0e0"/></svg>
<svg class="pi" style="left:258px;top:632px" width="17" height="16" viewBox="0 0 17 16" fill="none" stroke="#e0e0e0"><path d="M2 13L12 2.500"/><path d="M3 15.500c0-5 2-9 12-10" stroke="#b0b0b0"/><rect x="5.500" y="5.500" width="4" height="4" fill="#8a8a8a"/><rect x="1" y="12" width="2" height="2" fill="#e0e0e0"/><rect x="11" y="1.500" width="2" height="2" fill="#e0e0e0"/></svg>
<!-- Informationen -->
<div class="abs" style="left:123px;top:654px;width:207px;height:19px;background:#2f2f2f;border-top:1px solid #262626;border-bottom:1px solid #2a2a2a"></div>
<div class="abs" style="left:123px;top:655px;width:93px;height:18px;background:#4a4a4a;border-right:1px solid #2a2a2a"></div>
<svg class="abs" style="left:127px;top:660px" width="6" height="9" viewBox="0 0 6 9" fill="none" stroke="#e0e0e0" stroke-width="1"><path d="M.5 3.200L3 .8 5.500 3.200M.5 5.800L3 8.200 5.500 5.800"/></svg>
<div class="abs" style="left:136px;top:658px;font-size:11px;font-weight:bold;line-height:13px;color:#f0f0f0">Informationen</div>
<svg class="abs" style="left:313px;top:661px" width="13" height="7" viewBox="0 0 13 7"><path d="M0 1h4L2 3.500z" fill="#e0e0e0"/><path d="M5 .5h8M5 2.500h8M5 4.500h8M5 6.500h8" stroke="#e0e0e0" stroke-width="1"/></svg>
<svg class="abs" style="left:128px;top:688px" width="11" height="11" viewBox="0 0 11 11" fill="none" stroke="#e0e0e0"><path d="M4.500 0v10M0 4.500h10"/><path d="M7.500 6.500l3 2-3 2z" fill="#e0e0e0" stroke="none"/></svg>
<div class="sm" style="left:146px;top:678px">X:</div><div class="sm" style="left:156px;top:678px">844 px</div>
<div class="sm" style="left:146px;top:690px">Y:</div><div class="sm" style="left:156px;top:690px">533 px</div>
<div class="sm" style="left:146px;top:702px">D:</div>
<div class="abs" style="left:225px;top:676px;width:1px;height:62px;background:#393939"></div>
<svg class="abs" style="left:231px;top:687px" width="11" height="11" viewBox="0 0 11 11" fill="none" stroke="#e0e0e0"><rect x="2.500" y="2.500" width="7" height="6" stroke-dasharray="1 1"/><path d="M0 2.500h3M2.500 0v3" /><path d="M8 8l3 1.500-3 1.500z" fill="#e0e0e0" stroke="none"/></svg>
<div class="sm" style="left:249px;top:678px">B:</div><div class="sm" style="left:249px;top:690px">H:</div>
<svg class="abs" style="left:246px;top:702px" width="11" height="8" viewBox="0 0 11 8" fill="none" stroke="#e0e0e0"><path d="M.5 7.500h10L7 1z"/></svg>
<div class="hsep" style="left:125px;top:714px;width:201px"></div>
<div class="abs" style="left:225px;top:717px;width:1px;height:25px;background:#393939"></div>
<div class="hsep" style="left:125px;top:742px;width:201px"></div>
<div class="sm" style="left:126px;top:749px;width:100px;text-align:right">Position:</div>
<div class="sm" style="left:126px;top:761px;width:100px;text-align:right">Letzte Änderung:</div>
<div class="sm" style="left:126px;top:773px;width:100px;text-align:right">Autor:</div>
<div class="sm" style="left:126px;top:785px;width:100px;text-align:right">Dateigröße:</div>

<!-- scripts floating panel -->
<div class="abs" style="left:1544px;top:522px;width:209px;height:206px;background:#4a4a4a;border:1px solid #1e1e1e;box-shadow:0 1px 3px rgba(0,0,0,.3)"></div>
<div class="abs" style="left:1545px;top:523px;width:207px;height:21px;background:#2f2f2f;border-bottom:1px solid #262626"></div>
<div class="abs" style="left:1545px;top:524px;width:88px;height:19px;background:#363636;border-right:1px solid #282828;overflow:hidden"><div class="abs" style="left:8px;top:4px;font-size:11px;font-weight:bold;line-height:13px;color:#9c9c9c;white-space:nowrap">Datenzusammenführung</div></div>
<div class="abs" style="left:1633px;top:524px;width:54px;height:20px;background:#4a4a4a;border-right:1px solid #282828"></div>
<svg class="abs" style="left:1636px;top:529px" width="6" height="9" viewBox="0 0 6 9" fill="none" stroke="#e0e0e0" stroke-width="1"><path d="M.5 3.200L3 .8 5.500 3.200M.5 5.800L3 8.200 5.500 5.800"/></svg>
<div class="abs" style="left:1645px;top:528px;font-size:11px;font-weight:bold;line-height:13px;color:#f2f2f2">Skripte</div>
<svg class="abs" style="left:1711px;top:530px" width="11" height="8" viewBox="0 0 11 8"><path d="M0 0l5 4-5 4zM5.500 0l5 4-5 4z" fill="#dcdcdc"/></svg>
<div class="abs" style="left:1726px;top:528px;width:3px;height:12px;border-left:1px solid #5a5a5a;border-right:1px solid #5a5a5a"></div>
<svg class="abs" style="left:1733px;top:530px" width="15" height="8" viewBox="0 0 15 8"><path d="M0 1.500h5L2.500 4.500z" fill="#e0e0e0"/><path d="M6 .5h9M6 2.800h9M6 5.100h9M6 7.400h9" stroke="#e0e0e0" stroke-width="1"/></svg>
<div class="abs" style="left:1545px;top:545px;width:194px;height:20px;background:#4a4a4a;border-bottom:1px solid #333"></div>
<svg class="abs" style="left:1608px;top:546px" width="19" height="18" viewBox="0 0 19 18"><text x="0" y="13" font-family="Liberation Serif, serif" font-weight="bold" font-style="italic" font-size="15.500" fill="#d8d8d8" stroke="#d8d8d8" stroke-width=".7">S</text><ellipse cx="12.500" cy="11.500" rx="3.600" ry="4.600" transform="rotate(20 12.500 11.500)" fill="#d0d0d0" stroke="#4a4a4a" stroke-width=".6"/><path d="M10 14.500L15 8.500" stroke="#4a4a4a" stroke-width="1.100"/></svg>
<div class="sm" style="left:1628px;top:550px;color:#e6e6e6">FindChangeByList.jsx</div>
<div class="abs" style="left:1545px;top:565px;width:194px;height:20px;background:#4a4a4a;border-bottom:1px solid #333"></div>
<svg class="abs" style="left:1609px;top:569px" width="16" height="12" viewBox="0 0 16 12"><path d="M0 1.500a1 1 0 0 1 1-1h4.500l1.500 1.500h7.500a1 1 0 0 1 1 1v7.500a1 1 0 0 1-1 1H1a1 1 0 0 1-1-1z" fill="#cfcfcf"/></svg>
<svg class="abs" style="left:1551px;top:571px" width="6" height="10" viewBox="0 0 6 10"><path d="M0 0l6 5-6 5z" fill="#d6d6d6"/></svg>
<div class="sm" style="left:1628px;top:570px;color:#e6e6e6">FindChangeSupport</div>
<div class="abs" style="left:1545px;top:585px;width:194px;height:20px;background:#4a4a4a;border-bottom:1px solid #333"></div>
<svg class="abs" style="left:1608px;top:586px" width="19" height="18" viewBox="0 0 19 18"><text x="0" y="13" font-family="Liberation Serif, serif" font-weight="bold" font-style="italic" font-size="15.500" fill="#d8d8d8" stroke="#d8d8d8" stroke-width=".7">S</text><ellipse cx="12.500" cy="11.500" rx="3.600" ry="4.600" transform="rotate(20 12.500 11.500)" fill="#d0d0d0" stroke="#4a4a4a" stroke-width=".6"/><path d="M10 14.500L15 8.500" stroke="#4a4a4a" stroke-width="1.100"/></svg>
<div class="sm" style="left:1628px;top:590px;color:#e6e6e6">ImageCatalog.jsx</div>
<div class="abs" style="left:1545px;top:605px;width:194px;height:20px;background:#4a566c;border-bottom:1px solid #333"></div>
<svg class="abs" style="left:1608px;top:606px" width="19" height="18" viewBox="0 0 19 18"><text x="0" y="13" font-family="Liberation Serif, serif" font-weight="bold" font-style="italic" font-size="15.500" fill="#d8d8d8" stroke="#d8d8d8" stroke-width=".7">S</text><ellipse cx="12.500" cy="11.500" rx="3.600" ry="4.600" transform="rotate(20 12.500 11.500)" fill="#d0d0d0" stroke="#4a4a4a" stroke-width=".6"/><path d="M10 14.500L15 8.500" stroke="#4a4a4a" stroke-width="1.100"/></svg>
<div class="sm" style="left:1628px;top:610px;color:#ffffff">makeAPhotoBook.jsx</div>
<div class="abs" style="left:1545px;top:625px;width:194px;height:20px;background:#4a4a4a;border-bottom:1px solid #333"></div>
<svg class="abs" style="left:1608px;top:626px" width="19" height="18" viewBox="0 0 19 18"><text x="0" y="13" font-family="Liberation Serif, serif" font-weight="bold" font-style="italic" font-size="15.500" fill="#d8d8d8" stroke="#d8d8d8" stroke-width=".7">S</text><ellipse cx="12.500" cy="11.500" rx="3.600" ry="4.600" transform="rotate(20 12.500 11.500)" fill="#d0d0d0" stroke="#4a4a4a" stroke-width=".6"/><path d="M10 14.500L15 8.500" stroke="#4a4a4a" stroke-width="1.100"/></svg>
<div class="sm" style="left:1628px;top:630px;color:#e6e6e6">MakeGrid.jsx</div>
<div class="abs" style="left:1545px;top:645px;width:194px;height:20px;background:#4a4a4a;border-bottom:1px solid #333"></div>
<svg class="abs" style="left:1608px;top:646px" width="19" height="18" viewBox="0 0 19 18"><text x="0" y="13" font-family="Liberation Serif, serif" font-weight="bold" font-style="italic" font-size="15.500" fill="#d8d8d8" stroke="#d8d8d8" stroke-width=".7">S</text><ellipse cx="12.500" cy="11.500" rx="3.600" ry="4.600" transform="rotate(20 12.500 11.500)" fill="#d0d0d0" stroke="#4a4a4a" stroke-width=".6"/><path d="M10 14.500L15 8.500" stroke="#4a4a4a" stroke-width="1.100"/></svg>
<div class="sm" style="left:1628px;top:650px;color:#e6e6e6">makePicIndd_II.jsx</div>
<div class="abs" style="left:1545px;top:665px;width:194px;height:20px;background:#4a4a4a;border-bottom:1px solid #333"></div>
<svg class="abs" style="left:1608px;top:666px" width="19" height="18" viewBox="0 0 19 18"><text x="0" y="13" font-family="Liberation Serif, serif" font-weight="bold" font-style="italic" font-size="15.500" fill="#d8d8d8" stroke="#d8d8d8" stroke-width=".7">S</text><ellipse cx="12.500" cy="11.500" rx="3.600" ry="4.600" transform="rotate(20 12.500 11.500)" fill="#d0d0d0" stroke="#4a4a4a" stroke-width=".6"/><path d="M10 14.500L15 8.500" stroke="#4a4a4a" stroke-width="1.100"/></svg>
<div class="sm" style="left:1628px;top:670px;color:#e6e6e6">Neon.jsx</div>
<div class="abs" style="left:1545px;top:685px;width:194px;height:20px;background:#4a4a4a;border-bottom:1px solid #333"></div>
<svg class="abs" style="left:1608px;top:686px" width="19" height="18" viewBox="0 0 19 18"><text x="0" y="13" font-family="Liberation Serif, serif" font-weight="bold" font-style="italic" font-size="15.500" fill="#d8d8d8" stroke="#d8d8d8" stroke-width=".7">S</text><ellipse cx="12.500" cy="11.500" rx="3.600" ry="4.600" transform="rotate(20 12.500 11.500)" fill="#d0d0d0" stroke="#4a4a4a" stroke-width=".6"/><path d="M10 14.500L15 8.500" stroke="#4a4a4a" stroke-width="1.100"/></svg>
<div class="sm" style="left:1628px;top:690px;color:#e6e6e6">PathEffects.jsx</div>
<div class="abs" style="left:1739px;top:545px;width:13px;height:160px;background:#2c2c2c;border-left:1px solid #242424"></div>
<svg class="abs" style="left:1741px;top:550px" width="9" height="6" viewBox="0 0 9 6"><path d="M.5 5.500h8L4.500 .5z" fill="#e6e6e6"/></svg>
<svg class="abs" style="left:1741px;top:693px" width="9" height="6" viewBox="0 0 9 6"><path d="M.5 .5h8L4.500 5.500z" fill="#e6e6e6"/></svg>
<div class="abs" style="left:1740px;top:628px;width:11px;height:27px;background:#8c8c8c"></div>
<div class="abs" style="left:1545px;top:705px;width:207px;height:14px;background:#4a4a4a;border-bottom:1px solid #2c2c2c"></div>
<svg class="abs" style="left:1741px;top:708px" width="9" height="9" viewBox="0 0 9 9"><path d="M8.500 .5v1M6.500 2.500v1M8.500 2.500v1M4.500 4.500v1M6.500 4.500v1M8.500 4.500v1M2.500 6.500v1M4.500 6.500v1M6.500 6.500v1M8.500 6.500v1" stroke="#2a2a2a"/></svg>
<div class="abs" style="left:1545px;top:720px;width:207px;height:7px;background:#454545"></div>
<div class="abs" style="left:1638px;top:721px;width:20px;height:4px;background:repeating-linear-gradient(90deg,#1c1c1c 0,#1c1c1c 1px,transparent 1px,transparent 2px)"></div>
<!-- big background text on page -->
<div id="bigC" class="abs" style="left:556px;top:312px;font-size:290px;line-height:290px;color:#2d2d2d;white-space:nowrap">C</div>
<div id="bigr" class="abs" style="left:1161px;top:329px;font-size:265.500px;line-height:265.500px;color:#2d2d2d;white-space:nowrap">r</div>
<div class="abs" style="left:822px;top:861px;font-size:16.500px;line-height:20px;color:#313131;white-space:nowrap;letter-spacing:.36px">www.rolanddreger.net</div>
<!-- main dialog (inactive) -->
<div id="dlg1" class="abs" style="left:618px;top:302px;width:564px;height:375px;background:#484848;border-radius:5px 5px 4px 4px;box-shadow:0 12px 30px rgba(0,0,0,.4),0 0 0 1px rgba(0,0,0,.22);overflow:hidden">
<div class="abs" style="left:0;top:0;width:564px;height:22px;background:#f5f5f5;border-bottom:1px solid #cfcfcf;text-align:center;font-size:13.800px;line-height:24px;color:#b3b3b3">Fotobuch mit InDesign</div>
<!-- option panel 1 -->
<div class="abs" style="left:29px;top:50px;width:214px;height:139px;border:1px solid #333;box-shadow:inset 0 0 0 1px #4e4e4e"></div>
<div class="abs" style="left:51px;top:72px;width:170px;height:70px;background:#5a5a5a;border:1px solid #383838"></div>
<div class="abs" style="left:57px;top:77px;width:161px;height:61px;background:#858585"></div>
<svg class="abs" style="left:81px;top:93px;opacity:.88" width="36" height="24" viewBox="0 0 36 24"><rect width="36" height="24" fill="#5b9bc4"/><path d="M0 24L8 12l4 5 5-9 6 16z" fill="#8fb6c4"/><path d="M20 24l6-7 10 7z" fill="#6f9c8a"/><ellipse cx="13" cy="5.500" rx="4" ry="1.600" fill="#c9d8de"/><ellipse cx="26" cy="6" rx="4.500" ry="1.800" fill="#c4cf9a"/></svg>
<svg class="abs" style="left:130px;top:99px" width="18" height="14" viewBox="0 0 18 14" fill="none" stroke="#5c5c5c" stroke-width="1.600"><path d="M1 7h15M10.500 1.500L16.500 7l-6 5.500"/></svg>
<div class="abs" style="left:160px;top:92px;width:35px;height:25px;background:#8d97a0"></div>
<svg class="abs" style="left:165px;top:92px" width="26" height="24" viewBox="0 0 26 24"><rect x=".5" y=".5" width="25" height="23" fill="#6b9db8" stroke="#c8404a"/><rect x="3.500" y="3.500" width="19" height="16" fill="#7fa9bd" stroke="#1f3a4a" stroke-width="1.200"/><path d="M4 19l6-8 4 5 3-3 5 6z" fill="#9cbcc4"/></svg>
<div class="abs" style="left:173px;top:118px;font-size:9px;font-weight:bold;line-height:11px;color:#2e2e2e">A</div>
<div class="abs" style="left:29px;top:154px;width:214px;text-align:center;font-size:12px;line-height:16px;color:#8b8b8b;letter-spacing:.08px">Bild an Seitengröße anpassen</div>
<!-- double arrow -->
<svg class="abs" style="left:258px;top:105px" width="49" height="30" viewBox="0 0 49 30"><path d="M0 15L13 1v8h3v12h-3v8zM49 15L36 1v8h-3v12h3v8z" fill="#6f6f69"/><path d="M19 9v12M23 9v12M27 9v12M30.500 9v12" stroke="#6f6f69" stroke-width="2"/></svg>
<!-- option panel 2 -->
<div class="abs" style="left:321px;top:50px;width:214px;height:139px;border:1px solid #333;box-shadow:inset 0 0 0 1px #4e4e4e"></div>
<div class="abs" style="left:343px;top:72px;width:170px;height:70px;background:#5a5a5a;border:1px solid #383838"></div>
<div class="abs" style="left:349px;top:77px;width:161px;height:61px;background:#858585"></div>
<svg class="abs" style="left:375px;top:98px;opacity:.85" width="27" height="17" viewBox="0 0 27 17"><rect width="27" height="17" fill="#5e98c2"/><ellipse cx="9" cy="4" rx="5" ry="1.800" fill="#c6d6dc"/><rect y="9" width="27" height="8" fill="#7fa25a"/><rect x="12" y="8" width="13" height="4" fill="#8a5e48"/></svg>
<svg class="abs" style="left:416px;top:99px" width="18" height="14" viewBox="0 0 18 14" fill="none" stroke="#5c5c5c" stroke-width="1.600"><path d="M1 7h15M10.500 1.500L16.500 7l-6 5.500"/></svg>
<svg class="abs" style="left:445px;top:92px;opacity:.88" width="42" height="27" viewBox="0 0 42 27"><rect x=".5" y=".5" width="41" height="26" fill="#7fa25a" stroke="#c8404a"/><rect x="3" y="3" width="36" height="21" fill="#5e98c2" stroke="#1f3a2a" stroke-width="1.200"/><path d="M4 12c3-7 8-8 12-2l4 5h-16z" fill="#d0d8da"/><rect x="3.500" y="14" width="35" height="9.500" fill="#86a85c"/><path d="M14 18l8-5 12 2 2 5z" fill="#9a5e48"/><circle cx="26" cy="12" r="1.500" fill="#c23a2a"/></svg>
<div class="abs" style="left:321px;top:154px;width:214px;text-align:center;font-size:12px;line-height:16px;color:#8b8b8b;letter-spacing:.08px">Seite an Bildgröße anpassen</div>
<!-- lower left -->
<div class="abs" style="left:45px;top:219px;font-size:12.500px;line-height:16px;color:#8b8b8b;white-space:nowrap">Auswahl der Dateitypen</div>
<div class="abs" style="left:43px;top:245px;width:13px;height:13px;background:#3e3e3e;border:1px solid #343434;box-shadow:inset 0 1px 1px rgba(0,0,0,.3)"></div>
<svg class="abs" style="left:44px;top:242px" width="13" height="14" viewBox="0 0 13 14"><path d="M1.500 7.500l3.500 4L11.500 1.500" fill="none" stroke="#8f8f8f" stroke-width="1.800"/></svg>
<div class="abs" style="left:59px;top:245px;font-size:12.500px;line-height:16px;color:#8b8b8b">jpg</div>
<div class="abs" style="left:92px;top:245px;width:13px;height:13px;background:#3e3e3e;border:1px solid #343434;box-shadow:inset 0 1px 1px rgba(0,0,0,.3)"></div>
<svg class="abs" style="left:93px;top:242px" width="13" height="14" viewBox="0 0 13 14"><path d="M1.500 7.500l3.500 4L11.500 1.500" fill="none" stroke="#8f8f8f" stroke-width="1.800"/></svg>
<div class="abs" style="left:108px;top:245px;font-size:12.500px;line-height:16px;color:#8b8b8b">png</div>
<div class="abs" style="left:44px;top:293px;font-size:12.500px;line-height:16px;color:#8b8b8b;white-space:nowrap">Mehrseitige Dateien</div>
<svg class="abs" style="left:46px;top:319px" width="12" height="15" viewBox="0 0 12 15"><path d="M0 0h5.500v6H11v8.500H0z" fill="#8d8d8d"/><path d="M6.500 0L11 5H6.500z" fill="#8d8d8d"/></svg>
<svg class="abs" style="left:74px;top:319px" width="29" height="15" viewBox="0 0 29 15"><g fill="#8d8d8d"><path d="M0 0h4v5.500h5V14.500H0zM5 0l4 4.500H5z"/><path d="M10 0h4v5.500h5V14.500h-9zM15 0l4 4.500h-4z"/><path d="M20 0h4v5.500h5V14.500h-9zM25 0l4 4.500h-4z"/></g></svg>
<svg class="abs" style="left:46px;top:343px" width="11" height="4" viewBox="0 0 11 4"><path d="M0 4h11L5.500 0z" fill="#606060"/></svg>
<!-- cancel button -->
<div class="abs" style="left:451px;top:310px;width:83px;height:25px;background:#505050;border:1px solid #363636;box-shadow:inset 0 1px 0 #5c5c5c;text-align:center;font-size:12.300px;line-height:24px;color:#8c8c8c">Abbrechen</div>
</div>
<!-- front dialog -->
<div id="dlg2" class="abs" style="left:747px;top:499px;width:324px;height:234px;background:#494949;border-radius:5px 5px 4px 4px;box-shadow:0 20px 42px rgba(0,0,0,.52),0 5px 18px rgba(0,0,0,.2),0 0 0 1px rgba(0,0,0,.32);overflow:hidden">
<div class="abs" style="left:0;top:0;width:324px;height:22px;background:linear-gradient(#ebebeb,#d3d3d3);border-bottom:1px solid #b0b0b0;text-align:center;font-size:13.800px;line-height:24px;color:#3e3e3e;box-shadow:inset 0 1px 0 #f8f8f8">Auswahl der Musterseiten</div>
<div class="abs" style="left:35px;top:54px;width:254px;height:117px;border:1px solid #333;box-shadow:inset 0 0 0 1px #505050,0 0 0 0 #505050"></div>
<div class="abs" style="left:44px;top:46px;width:156px;height:16px;background:#494949"></div>
<div class="abs" style="left:49px;top:47px;font-size:12.400px;line-height:16px;color:#e8e8e8;white-space:nowrap">Musterseite für Bilder im ...</div>
<div class="abs" style="left:40px;top:90px;width:99px;text-align:right;font-size:12.500px;line-height:16px;color:#e8e8e8">Querformat:</div>
<div class="abs" style="left:40px;top:123px;width:99px;text-align:right;font-size:12.500px;line-height:16px;color:#e8e8e8">Hochformat:</div>
<div class="abs dd" style="left:150px;top:86px;width:102px;height:21px;background:linear-gradient(#575757,#4c4c4c);border:1px solid #2c2c2c;box-shadow:inset 0 1px 0 #646464;border-radius:1px"></div>
<div class="abs" style="left:157px;top:89px;font-size:12.500px;line-height:16px;color:#efefef;white-space:nowrap;letter-spacing:-.1px">A-Landscape</div>
<div class="abs" style="left:233px;top:89px;width:1px;height:15px;background:#3a3a3a;box-shadow:1px 0 0 #606060"></div>
<div class="abs" style="left:239px;top:94px;border:4px solid transparent;border-bottom:0;border-top:5px solid #e8e8e8"></div>
<div class="abs dd" style="left:149px;top:118px;width:104px;height:23px;background:linear-gradient(#575757,#4c4c4c);border:1px solid #d98b36;box-shadow:inset 0 0 0 1px #2c2c2c;border-radius:1px"></div>
<div class="abs" style="left:157px;top:122px;font-size:12.500px;line-height:16px;color:#efefef;white-space:nowrap">B-Portrait</div>
<div class="abs" style="left:233px;top:122px;width:1px;height:15px;background:#3a3a3a;box-shadow:1px 0 0 #606060"></div>
<div class="abs" style="left:239px;top:127px;border:4px solid transparent;border-bottom:0;border-top:5px solid #e8e8e8"></div>
<div class="abs" style="left:113px;top:193px;width:86px;height:24px;background:linear-gradient(#585858,#4e4e4e);border:1px solid #2d2d2d;box-shadow:inset 0 1px 0 #686868;text-align:center;font-size:12.400px;line-height:24px;color:#efefef">Abbrechen</div>
<div class="abs" style="left:211px;top:193px;width:78px;height:24px;background:linear-gradient(#585858,#4e4e4e);border:1px solid #2d2d2d;box-shadow:inset 0 1px 0 #686868;text-align:center;font-size:12.500px;line-height:24px;color:#efefef">Weiter</div>
</div>

<!-- v scrollbar arrows -->
<svg class="abs" style="left:1740px;top:108px" width="9" height="6" viewBox="0 0 9 6"><path d="M0 6h9L4.500 0z" fill="#e6e6e6"/></svg>
<svg class="abs" style="left:1740px;top:956px" width="9" height="6" viewBox="0 0 9 6"><path d="M0 0h9L4.500 6z" fill="#e6e6e6"/></svg>
<!-- status bar -->
<svg class="abs" style="left:74px;top:969px" width="20" height="12" viewBox="0 0 20 12"><rect x=".5" y="1.500" width="19" height="9" rx="2" fill="#cfcfcf"/><circle cx="5.500" cy="6" r="2.600" fill="#333"/><circle cx="5.500" cy="6" r="1" fill="#cfcfcf"/><path d="M11 4.500h5l-1.500-1.500M17 7.500h-5l1.500 1.500" stroke="#333" fill="none" stroke-width="1.100"/></svg>
<svg class="abs" style="left:101px;top:969px" width="14" height="12" viewBox="0 0 14 12" fill="none" stroke="#d0d0d0" stroke-width="1.300"><path d="M5 2.500H1v8.500h9.500V8"/><path d="M5 7.500c.5-3 2.500-4.500 6-4.500" /><path d="M9.500 0L14 3l-4.500 3z" fill="#d0d0d0" stroke="none"/></svg>
<svg class="abs" style="left:124px;top:970px" width="9" height="10" viewBox="0 0 9 10"><path d="M.7 0v10" stroke="#8a8a8a" stroke-width="1.300"/><path d="M8 .5v9L2.500 5z" fill="#8a8a8a"/></svg>
<svg class="abs" style="left:140px;top:970px" width="6" height="10" viewBox="0 0 6 10"><path d="M5.500 .5v9L0 5z" fill="#8a8a8a"/></svg>
<div class="sm" style="left:154px;top:971px;color:#e8e8e8">1</div>
<svg class="abs" style="left:237px;top:974px" width="8" height="5" viewBox="0 0 8 5"><path d="M0 0h8L4 5z" fill="#d8d8d8"/></svg>
<svg class="abs" style="left:255px;top:970px" width="6" height="10" viewBox="0 0 6 10"><path d="M.5 .5v9L6 5z" fill="#8a8a8a"/></svg>
<svg class="abs" style="left:267px;top:970px" width="9" height="10" viewBox="0 0 9 10"><path d="M8.300 0v10" stroke="#8a8a8a" stroke-width="1.300"/><path d="M1 .5v9L6.500 5z" fill="#8a8a8a"/></svg>
<svg class="abs" style="left:284px;top:968px" width="18" height="14" viewBox="0 0 18 14"><circle cx="6.500" cy="7" r="6" fill="none" stroke="#d8d8d8" stroke-width="1.200"/><path d="M4 3.500h3l2 2V10.500H4z" fill="#d8d8d8"/><path d="M13 10.500h4l-2 2.500z" fill="#d8d8d8"/></svg>
<div class="sm" style="left:310px;top:971px;color:#6e6e6e;letter-spacing:-.3px">[Grundprofil] (Arbeitsp...</div>
<svg class="abs" style="left:414px;top:973px" width="8" height="6" viewBox="0 0 8 6"><path d="M0 0h8L4 6z" fill="#686868"/></svg>
<div class="abs" style="left:430px;top:970px;width:10px;height:10px;border-radius:50%;background:#5e5e5e"></div>
<div class="sm" style="left:444px;top:971px;color:#e8e8e8">Preflight aus</div>
<svg class="abs" style="left:514px;top:974px" width="8" height="5" viewBox="0 0 8 5"><path d="M0 0h8L4 5z" fill="#d8d8d8"/></svg>
<div class="abs" style="left:526px;top:968px;width:1px;height:14px;background:#262626"></div>
<svg class="abs" style="left:530px;top:970px" width="6" height="10" viewBox="0 0 6 10"><path d="M5.500 .5v9L0 5z" fill="#e6e6e6"/></svg>
<!-- h scrollbar -->
<div class="abs" style="left:833px;top:968px;width:572px;height:14px;background:#8a8a8a;border:1px solid #a0a0a0;border-right-color:#777;border-bottom-color:#777"></div>
<svg class="abs" style="left:1702px;top:970px" width="6" height="10" viewBox="0 0 6 10"><path d="M.5 .5v9L6 5z" fill="#e6e6e6"/></svg>
<svg class="abs" style="left:1719px;top:969px" width="15" height="12" viewBox="0 0 15 12" fill="none" stroke="#dcdcdc" stroke-width="1.200"><rect x=".6" y=".6" width="13.800" height="10.800"/><path d="M7.500 .6v10.800"/></svg>
<svg class="abs" style="left:1740px;top:971px" width="10" height="10" viewBox="0 0 10 10"><path d="M8.500 1.500v1M6.500 3.500v1M8.500 3.500v1M4.500 5.500v1M6.500 5.500v1M8.500 5.500v1M2.500 7.500v1M4.500 7.500v1M6.500 7.500v1M8.500 7.500v1" stroke="#777"/></svg>

</div></body></html>
